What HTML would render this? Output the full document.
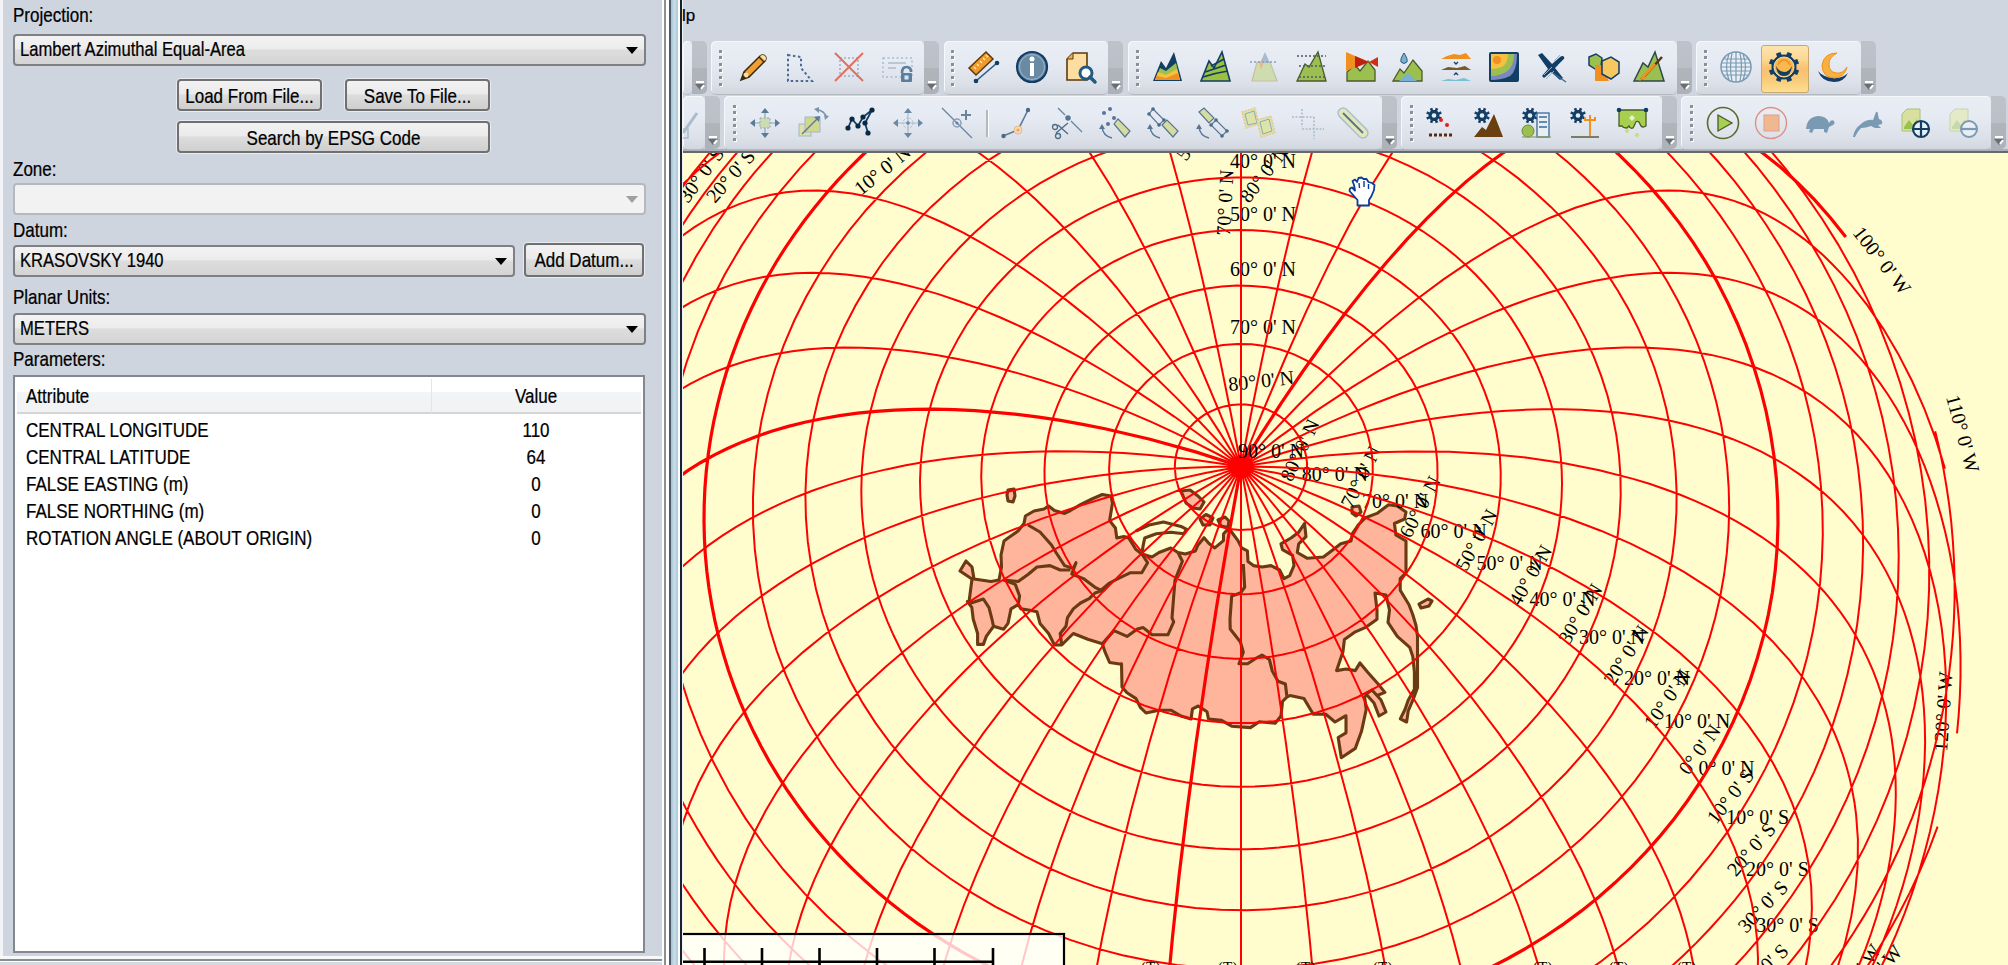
<!DOCTYPE html><html><head><meta charset="utf-8"><style>html,body{-webkit-text-stroke:0.2px #000;margin:0;padding:0;width:2008px;height:965px;overflow:hidden;background:#CFD5DE;font-family:"Liberation Sans",sans-serif;}
#left{position:absolute;left:0;top:0;width:662px;height:965px;background:#CFD5DE;}
#left:before{content:"";position:absolute;left:0;top:0;width:3px;height:956px;background:#F2F4F7}
.lbl{position:absolute;font-size:17px;color:#000;white-space:nowrap;line-height:20px}
.combo{position:absolute;border:2px solid #7E8084;border-radius:4px;background:linear-gradient(#F3F3F3 0%,#ECECEC 45%,#DDDDDD 50%,#D4D4D4 100%);box-sizing:content-box}
.combo.dis{background:#F2F2F2;border-color:#B5B8BD}
.ctext{position:absolute;left:5px;top:5px;font-size:16.6px;line-height:20px;white-space:nowrap;color:#000}
.arr{position:absolute;right:6px;top:11px;width:0;height:0;border-left:6px solid transparent;border-right:6px solid transparent;border-top:7px solid #000}
.dis .arr{border-top-color:#A0A0A0}
.btn{position:absolute;border:2px solid #707070;border-radius:4px;background:linear-gradient(#F2F2F2 0%,#EBEBEB 45%,#DDDDDD 50%,#CFCFCF 100%);font-size:17px;text-align:center;line-height:28px;white-space:nowrap;box-sizing:border-box;box-shadow:0 0 0 1px #E8ECF2}
#list{position:absolute;left:13px;top:375px;width:628px;height:574px;border:2px solid #828790;background:#fff;}
#lhdr{position:absolute;left:2px;top:2px;width:624px;height:33px;background:linear-gradient(#FFFFFF 0%,#FFFFFF 40%,#F3F4F6 41%,#F1F2F4 100%);border-bottom:2px solid #D5D5D5;font-size:17px;}
.row{position:absolute;left:0;width:628px;height:27px;font-size:17px;line-height:27px}
.row .a{position:absolute;left:11px}
.row .v{position:absolute;left:418px;width:206px;text-align:center}
#split{position:absolute;left:662px;top:0;width:21px;height:965px}
#split i{position:absolute;top:0;height:965px}
#topbg{position:absolute;left:683px;top:0;width:1325px;height:149px;background:#D0D6DF}
#tbline{position:absolute;left:683px;top:149px;width:1325px;height:2px;background:#ADB0B5}
#tbline2{position:absolute;left:683px;top:151px;width:1325px;height:2px;background:#66686D;z-index:5}
#top{position:absolute;left:0;top:0}
.menu{position:absolute;font-size:17px;line-height:20px;color:#000}
.tb{position:absolute;border-radius:5px;background:linear-gradient(#E9EDF4 0%,#E6EAF2 40%,#DCE1E9 80%,#D2D7DF 100%);box-shadow:inset 1px 1px 0 #F6F8FB, 0 1px 0 #B4B9C0}
.ov{position:absolute;border-radius:0 5px 5px 0;background:linear-gradient(#BEC3CB 0%,#BAC0C8 50%,#B0B4BB 51%,#ADB1B8 100%);}
.ov .ch1{position:absolute;left:4px;bottom:11px;width:8px;height:2px;background:#fff}
.ov .ch2{position:absolute;left:3px;bottom:4px;width:0;height:0;border-left:5px solid transparent;border-right:5px solid transparent;border-top:6px solid #6A6E74}
.ov .ch2:after{content:'';position:absolute;left:0px;top:-4px;width:5px;height:2px;background:#fff;transform:rotate(-50deg)}
.gd{position:absolute;width:3px;height:3px;background:#8A9098;box-shadow:1px 1px 0 #fff}
.sep{position:absolute;width:2px;height:27px;background:#B0B8C4;box-shadow:1px 0 0 #fff}
.ic{position:absolute;overflow:visible}
.hl{position:absolute;left:1761px;top:45px;width:46px;height:46px;border:1px solid #C8A870;border-radius:3px;background:linear-gradient(#FCE4B0 0%,#FBD890 30%,#F9C070 50%,#F9C878 70%,#FCE090 100%)}
#map{position:absolute;left:683px;top:152px}

.lbl,.ctext{transform:scaleY(1.2);transform-origin:0 16px}
.bt{display:inline-block;position:relative;top:2.5px;line-height:20px;transform:scaleY(1.2);transform-origin:50% 16px}
.hd{line-height:20px;transform:scaleY(1.2);transform-origin:0 16px}
.row .a,.row .v{transform:scaleY(1.2);transform-origin:0 19.5px}
</style></head><body><div id="left">
  <div class="lbl" style="left:13px;top:7px">Projection:</div>
  <div class="combo" style="left:13px;top:34px;width:629px;height:28px"><span class="ctext">Lambert Azimuthal Equal-Area</span><i class="arr"></i></div>
  <div class="btn" style="left:177px;top:79px;width:145px;height:32px"><span class="bt">Load From File...</span></div>
  <div class="btn" style="left:345px;top:79px;width:145px;height:32px"><span class="bt">Save To File...</span></div>
  <div class="btn" style="left:177px;top:121px;width:313px;height:32px"><span class="bt">Search by EPSG Code</span></div>
  <div class="lbl" style="left:13px;top:161px">Zone:</div>
  <div class="combo dis" style="left:13px;top:183px;width:629px;height:28px"><i class="arr"></i></div>
  <div class="lbl" style="left:13px;top:222px">Datum:</div>
  <div class="combo" style="left:13px;top:245px;width:498px;height:28px"><span class="ctext">KRASOVSKY 1940</span><i class="arr"></i></div>
  <div class="btn" style="left:524px;top:243px;width:120px;height:34px"><span class="bt">Add Datum...</span></div>
  <div class="lbl" style="left:13px;top:289px">Planar Units:</div>
  <div class="combo" style="left:13px;top:313px;width:629px;height:28px"><span class="ctext">METERS</span><i class="arr"></i></div>
  <div class="lbl" style="left:13px;top:351px">Parameters:</div>
  <div id="list">
    <div id="lhdr"><span class="hd" style="position:absolute;left:9px;top:9px">Attribute</span><span style="position:absolute;left:414px;top:0;width:1px;height:34px;background:#E3E5E8"></span><span class="hd" style="position:absolute;left:416px;width:206px;text-align:center;top:9px">Value</span></div>
    <div class="row" style="top:41px"><span class="a">CENTRAL LONGITUDE</span><span class="v">110</span></div>
    <div class="row" style="top:68px"><span class="a">CENTRAL LATITUDE</span><span class="v">64</span></div>
    <div class="row" style="top:95px"><span class="a">FALSE EASTING (m)</span><span class="v">0</span></div>
    <div class="row" style="top:122px"><span class="a">FALSE NORTHING (m)</span><span class="v">0</span></div>
    <div class="row" style="top:149px"><span class="a">ROTATION ANGLE (ABOUT ORIGIN)</span><span class="v">0</span></div>
  </div>
  <div style="position:absolute;left:0;top:956px;width:662px;height:3px;background:#F7F8FA"></div>
  <div style="position:absolute;left:0;top:959px;width:662px;height:2px;background:#8A8C90"></div>
  <div style="position:absolute;left:0;top:961px;width:662px;height:1px;background:#FFFFFF"></div>
  <div style="position:absolute;left:0;top:962px;width:662px;height:3px;background:#D5DAE2"></div>
</div>
<div id="split"><i style="left:0;width:2px;background:#FFFFFF"></i><i style="left:2px;width:2px;background:#8C9096"></i><i style="left:4px;width:3px;background:#FFFFFF"></i><i style="left:7px;width:1.5px;background:#4A5A6A"></i><i style="left:8.5px;width:7.5px;background:linear-gradient(90deg,#A8C4D4,#C8DCE8 50%,#A8C8DA)"></i><i style="left:16px;width:2px;background:#FFFFFF"></i><i style="left:18px;width:2px;background:#1A2228"></i><i style="left:20px;width:1px;background:#F0F4F8"></i></div>
<div id="topbg"></div>
<div id="tbline"></div><div id="tbline2"></div>

<div id="top"><div class="menu" style="left:682px;top:6px">lp</div><div class="tb" style="left:683px;top:41px;width:9px;height:53px"></div><div class="ov" style="left:692px;top:41px;width:15px;height:53px"><i class="ch1"></i><i class="ch2"></i></div><div class="tb" style="left:711px;top:41px;width:213px;height:53px"></div><div class="ov" style="left:924px;top:41px;width:15px;height:53px"><i class="ch1"></i><i class="ch2"></i></div><i class="gd" style="left:719px;top:50px"></i><i class="gd" style="left:719px;top:56px"></i><i class="gd" style="left:719px;top:63px"></i><i class="gd" style="left:719px;top:69px"></i><i class="gd" style="left:719px;top:76px"></i><i class="gd" style="left:719px;top:83px"></i><svg class="ic" style="left:737px;top:50px" width="34" height="34" viewBox="-1 -1 34 34"><path d="M3 29 L6 21 L22 5 Q25 3 27 5 Q29 7 27 10 L11 26 Z" fill="#F0A030" stroke="#3A2A10" stroke-width="1.5"/><path d="M6 21 L11 26" stroke="#3A2A10" stroke-width="1.3"/><path d="M21 6 L26 11" stroke="#3A2A10" stroke-width="1.3"/><path d="M22 5 Q25 3 27 5 Q29 7 27 10 Z" fill="#F8E0A0"/><circle cx="8" cy="24" r="2.5" fill="#F8E0A0"/><path d="M3 29 L5 24 L8 27 Z" fill="#3A2A10"/></svg><svg class="ic" style="left:783px;top:50px" width="34" height="34" viewBox="-1 -1 34 34"><path d="M4 4 L17 6 L17 17 L28 30 L4 30 Z" fill="none" stroke="#4A6A96" stroke-width="2" stroke-dasharray="2.5 2.5"/></svg><svg class="ic" style="left:832px;top:50px" width="34" height="34" viewBox="-1 -1 34 34"><rect x="7" y="7" width="18" height="18" fill="none" stroke="#9AB0C6" stroke-width="1.5" stroke-dasharray="2 2"/><path d="M2 2 L30 30 M30 2 L2 30" stroke="#E07060" stroke-width="2"/></svg><svg class="ic" style="left:880px;top:50px" width="34" height="34" viewBox="-1 -1 34 34"><rect x="2" y="7" width="29" height="19" fill="none" stroke="#A8BCD0" stroke-width="1.5" stroke-dasharray="2 2.5"/><path d="M7 12 L25 12 M7 17 L15 17" stroke="#A8BCD0" stroke-width="1.5"/><path d="M21 22 Q21 16 25.5 16 Q30 16 30 21" fill="none" stroke="#5A7EA0" stroke-width="2.6"/><rect x="20" y="22" width="11" height="9" rx="1" fill="#5A7EA0"/><rect x="23.5" y="24.5" width="4" height="4" fill="#DDE6F0"/></svg><div class="tb" style="left:944px;top:41px;width:164px;height:53px"></div><div class="ov" style="left:1108px;top:41px;width:15px;height:53px"><i class="ch1"></i><i class="ch2"></i></div><i class="gd" style="left:951px;top:50px"></i><i class="gd" style="left:951px;top:56px"></i><i class="gd" style="left:951px;top:63px"></i><i class="gd" style="left:951px;top:69px"></i><i class="gd" style="left:951px;top:76px"></i><i class="gd" style="left:951px;top:83px"></i><svg class="ic" style="left:967px;top:50px" width="34" height="34" viewBox="-1 -1 34 34"><path d="M1 17 L18 1 L25 8 L8 24 Z" fill="#F09A28" stroke="#5A3A10" stroke-width="1.5"/><path d="M6 16 l2 2 M9 13 l2 2 M12 10 l2 2 M15 7 l2 2 M18 4 l2 2" stroke="#FFF0C0" stroke-width="1.2"/><path d="M8 30 L29 12" stroke="#2A5A80" stroke-width="1.6"/><circle cx="8" cy="30" r="2.3" fill="#123E66"/><circle cx="29" cy="12" r="2.3" fill="#123E66"/></svg><svg class="ic" style="left:1015px;top:50px" width="34" height="34" viewBox="-1 -1 34 34"><circle cx="16" cy="16" r="15" fill="#6A8AA4" stroke="#123E66" stroke-width="2.2"/><circle cx="16" cy="16" r="12.5" fill="none" stroke="#A8C0D4" stroke-width="0.8"/><circle cx="16" cy="8" r="2.5" fill="#fff"/><rect x="14" y="12" width="4" height="13" fill="#fff"/></svg><svg class="ic" style="left:1063px;top:50px" width="34" height="34" viewBox="-1 -1 34 34"><path d="M3 8 L9 2 L23 2 L23 29 L3 29 Z" fill="#FDDDA0" stroke="#5A3A10" stroke-width="1.6"/><path d="M3 8 L9 8 L9 2" fill="#F0B050" stroke="#5A3A10" stroke-width="1"/><circle cx="22" cy="22" r="6" fill="#fff" stroke="#235A80" stroke-width="3"/><path d="M26 26 L31 31" stroke="#235A80" stroke-width="3.5" stroke-linecap="round"/></svg><div class="tb" style="left:1128px;top:41px;width:549px;height:53px"></div><div class="ov" style="left:1677px;top:41px;width:15px;height:53px"><i class="ch1"></i><i class="ch2"></i></div><i class="gd" style="left:1136px;top:50px"></i><i class="gd" style="left:1136px;top:56px"></i><i class="gd" style="left:1136px;top:63px"></i><i class="gd" style="left:1136px;top:69px"></i><i class="gd" style="left:1136px;top:76px"></i><i class="gd" style="left:1136px;top:83px"></i><svg class="ic" style="left:1151px;top:50px" width="34" height="34" viewBox="-1 -1 34 34"><path d="M1 30 L9 10 L14 17 L22 1 L30 30 Z" fill="#123E66"/><path d="M3 29 L8 17 L14 20 L24 12 L28 29 Z" fill="#9CC050"/><path d="M3 29 L6 21 L14 24 L25 18 L28 29 Z" fill="#F8C040"/><path d="M3 29 L5 25 L14 27 L26 22 L28 29 Z" fill="#F09020"/></svg><svg class="ic" style="left:1199px;top:50px" width="34" height="34" viewBox="-1 -1 34 34"><path d="M1 30 L9 10 L14 17 L22 1 L30 30 Z" fill="#9CC040" stroke="#123E66" stroke-width="1.6"/><path d="M5 21 Q14 18 26 14 M3 26 Q15 22 28 20 M11 15 Q17 12 24 8" stroke="#123E66" stroke-width="1.6" fill="none"/></svg><svg class="ic" style="left:1247px;top:50px" width="34" height="34" viewBox="-1 -1 34 34"><path d="M4 30 L9 11 L22 11 L29 30 Z" fill="#CFDCAF" stroke="#C8C0A0" stroke-width="1.2"/><path d="M17 1 L12 12 L22 12 Z" fill="#A8BCCC"/><path d="M11 11 L16 11 L13 19 Z" fill="#E8B890"/><path d="M2 11 L30 11" stroke="#8AA0B8" stroke-width="1.5" stroke-dasharray="2 2"/></svg><svg class="ic" style="left:1295px;top:50px" width="34" height="34" viewBox="-1 -1 34 34"><path d="M1 30 L9 13 L13 16 L22 1 L30 30 Z" fill="#9CC050" stroke="#4A5A2A" stroke-width="1.3"/><path d="M1 5 L30 5 M3 15 L30 15 M3 26 L30 26" stroke="#4A5A6A" stroke-width="1.3" stroke-dasharray="2 2"/></svg><svg class="ic" style="left:1344px;top:50px" width="34" height="34" viewBox="-1 -1 34 34"><path d="M2 30 L2 21 L10 14 L15 20 L23 10 L30 19 L30 30 Z" fill="#9CC050" stroke="#4A5A2A" stroke-width="1.3"/><path d="M1 1 L24 11 L1 20 Z" fill="#F09020"/><path d="M10 5 L24 11 L10 17 Z" fill="#C02010"/><path d="M24 11 L33 6 L33 16 Z" fill="#D03010"/></svg><svg class="ic" style="left:1391px;top:50px" width="34" height="34" viewBox="-1 -1 34 34"><path d="M1 30 L8 18 L12 22 L21 9 L30 20 L30 30 Z" fill="#9CC050" stroke="#4A5A2A" stroke-width="1.3"/><path d="M7 30 L16 22 L25 30 Z" fill="#7AB0D0"/><path d="M12 2 Q8 8 9 11 Q12 14 15 11 Q16 8 12 2 Z" fill="#7AB0D0" stroke="#2A5A80" stroke-width="1"/></svg><svg class="ic" style="left:1439px;top:50px" width="34" height="34" viewBox="-1 -1 34 34"><path d="M1 8 L7 5 L14 3 L20 4 L26 2 L31 8 Z" fill="#F09020"/><path d="M1 19 L8 16 L17 17 L25 15 L31 19 Z" fill="#7A5A2A"/><path d="M1 30 L8 28 L16 29 L24 27 L31 30 Z" fill="#7AC0D0"/><path d="M14 11 l2 2 l2 -2 M14 24 l2 -2 l2 2" stroke="#123E66" stroke-width="1.3" fill="none"/></svg><svg class="ic" style="left:1487px;top:50px" width="34" height="34" viewBox="-1 -1 34 34"><rect x="1" y="1" width="30" height="30" rx="2" fill="#123E66"/><path d="M3 3 L29 3 Q29 20 22 25 Q14 29 3 29 Z" fill="#7A88C0"/><path d="M3 3 L26 3 Q26 16 18 21 Q11 25 3 25 Z" fill="#9CC050"/><path d="M3 3 L20 3 Q20 12 14 16 Q9 18 3 18 Z" fill="#F8C040"/><circle cx="9" cy="9" r="4" fill="#F09020"/></svg><svg class="ic" style="left:1535px;top:50px" width="34" height="34" viewBox="-1 -1 34 34"><path d="M2 4 L6 2 L16 13 L24 6 Q27 4 28 6 Q29 8 26 10 L19 17 L27 27 L24 29 L15 21 L8 27 L6 25 L12 18 Z" fill="#123E66"/><path d="M17 22 L30 31" stroke="#3A6A90" stroke-width="1.3"/><path d="M8 24 L16 16 M10 28 L18 20 M18 10 L24 4 M22 14 L28 8" stroke="#9AB4C8" stroke-width="1"/></svg><svg class="ic" style="left:1584px;top:50px" width="34" height="34" viewBox="-1 -1 34 34"><path d="M4 6 L11 3 L17 7 L16 15 L10 18 L4 14 Z" fill="#9CC050" stroke="#123E66" stroke-width="1.5"/><path d="M10 14 L16 14 L24 30 L10 30 Z" fill="#F09020"/><path d="M17 10 L26 6 L34 11 L34 22 L26 28 L17 23 Z" fill="#F8C860" stroke="#123E66" stroke-width="1.5"/></svg><svg class="ic" style="left:1632px;top:50px" width="34" height="34" viewBox="-1 -1 34 34"><path d="M1 30 L10 12 L15 16 L22 1 L31 30 Z" fill="#9CC050" stroke="#2A4A4A" stroke-width="1.5"/><path d="M8 29 L29 6" stroke="#5A3010" stroke-width="2.5"/><path d="M6 30 L10 24 L14 27 Z" fill="#F09020"/><path d="M10 26 L22 13" stroke="#F09020" stroke-width="3"/></svg><div class="tb" style="left:1696px;top:41px;width:165px;height:53px"></div><div class="hl"></div><div class="ov" style="left:1861px;top:41px;width:15px;height:53px"><i class="ch1"></i><i class="ch2"></i></div><i class="gd" style="left:1704px;top:50px"></i><i class="gd" style="left:1704px;top:56px"></i><i class="gd" style="left:1704px;top:63px"></i><i class="gd" style="left:1704px;top:69px"></i><i class="gd" style="left:1704px;top:76px"></i><i class="gd" style="left:1704px;top:83px"></i><svg class="ic" style="left:1719px;top:50px" width="34" height="34" viewBox="-1 -1 34 34"><circle cx="16" cy="16" r="15" fill="#E8EEF4" stroke="#7A9AB4" stroke-width="1.5"/><path d="M16 1 L16 31 M1 16 L31 16 M4 8 L28 8 M4 24 L28 24 M9 3 Q4 16 9 29 M23 3 Q28 16 23 29 M12 2 Q9 16 12 30 M20 2 Q23 16 20 30 M2 12 L30 12 M2 20 L30 20" stroke="#7A9AB4" stroke-width="1.2" fill="none"/></svg><svg class="ic" style="left:1767px;top:50px" width="34" height="34" viewBox="-1 -1 34 34"><path d="M28.5 16.0 L28.3 18.4 L31.1 19.6 L29.2 24.1 L26.4 22.9 L24.8 24.8 L22.9 26.4 L24.1 29.2 L19.6 31.1 L18.4 28.3 L16.0 28.5 L13.6 28.3 L12.4 31.1 L7.9 29.2 L9.1 26.4 L7.2 24.8 L5.6 22.9 L2.8 24.1 L0.9 19.6 L3.7 18.4 L3.5 16.0 L3.7 13.6 L0.9 12.4 L2.8 7.9 L5.6 9.1 L7.2 7.2 L9.1 5.6 L7.9 2.8 L12.4 0.9 L13.6 3.7 L16.0 3.5 L18.4 3.7 L19.6 0.9 L24.1 2.8 L22.9 5.6 L24.8 7.2 L26.4 9.1 L29.2 7.9 L31.1 12.4 L28.3 13.6Z" fill="#123E66"/><circle cx="16" cy="16" r="10" fill="#F8B850" stroke="#FCE0A0" stroke-width="1"/><path d="M8 15 Q9 25 16 25 Q23 25 24 15 Q21 21 16 21 Q11 21 8 15 Z" fill="#123E66"/><path d="M10 14 Q12 9 16 9 Q20 9 22 14" stroke="#F09020" stroke-width="1.6" fill="none"/></svg><svg class="ic" style="left:1815px;top:50px" width="34" height="34" viewBox="-1 -1 34 34"><path d="M2 20 Q6 31 18 31 Q28 31 32 22 Q26 28 17 27 Q7 26 2 20 Z" fill="#123E66"/><path d="M21 2 Q8 2 6 14 Q6 26 18 27 Q29 26 31 16 Q27 23 20 22 Q13 21 13 13 Q13 6 21 2 Z" fill="#F8B040" stroke="#F09020" stroke-width="1"/></svg><div class="tb" style="left:683px;top:96px;width:22px;height:53px"></div><svg style="position:absolute;left:683px;top:103px" width="22" height="40"><path d="M0 30 L14 10" stroke="#A8BCCC" stroke-width="3"/><rect x="-6" y="26" width="11" height="9" fill="none" stroke="#A8BCCC" stroke-width="1.5"/></svg><div class="ov" style="left:705px;top:96px;width:15px;height:53px"><i class="ch1"></i><i class="ch2"></i></div><div class="tb" style="left:724px;top:96px;width:658px;height:53px"></div><div class="ov" style="left:1382px;top:96px;width:15px;height:53px"><i class="ch1"></i><i class="ch2"></i></div><i class="gd" style="left:733px;top:105px"></i><i class="gd" style="left:733px;top:111px"></i><i class="gd" style="left:733px;top:118px"></i><i class="gd" style="left:733px;top:124px"></i><i class="gd" style="left:733px;top:131px"></i><i class="gd" style="left:733px;top:138px"></i><svg class="ic" style="left:748px;top:106px" width="34" height="34" viewBox="-1 -1 34 34"><path d="M16 1 L20 6 L12 6 Z M16 31 L20 26 L12 26 Z M1 16 L6 12 L6 20 Z M31 16 L26 12 L26 20 Z" fill="#5A7A96"/><path d="M16 6 L16 26 M6 16 L26 16" stroke="#8AA4BC" stroke-width="1.2"/><rect x="11" y="11" width="10" height="10" fill="#CDDCB0" stroke="#8AA4BC" stroke-width="1" stroke-dasharray="2 1.5"/></svg><svg class="ic" style="left:796px;top:106px" width="34" height="34" viewBox="-1 -1 34 34"><rect x="2" y="17" width="12" height="12" fill="#DDE0A8" stroke="#A0B8C8" stroke-width="1"/><rect x="8" y="10" width="15" height="15" fill="#D0D890" stroke="#A0B8C8" stroke-width="1"/><path d="M5 27 L21 11" stroke="#5A7A96" stroke-width="1.5"/><path d="M23 9 L17 10 L22 15 Z" fill="#5A7A96"/><path d="M20 3 Q27 3 30 11" stroke="#7A94AC" stroke-width="1.5" fill="none"/><path d="M17 2 L22 0 L22 6 Z M28 13 L32 9 L27 8 Z" fill="#7A94AC"/></svg><svg class="ic" style="left:843px;top:106px" width="34" height="34" viewBox="-1 -1 34 34"><path d="M4 21 L8 12 L14 19 L19 10 L28 3 L21 16 L24 26" stroke="#123E66" stroke-width="1.8" fill="none"/><circle cx="4" cy="21" r="2.6" fill="#0A2A44"/><circle cx="8" cy="12" r="2.6" fill="#0A2A44"/><circle cx="14" cy="19" r="2.6" fill="#0A2A44"/><circle cx="19" cy="10" r="2.6" fill="#0A2A44"/><circle cx="28" cy="3" r="2.6" fill="#0A2A44"/><circle cx="21" cy="16" r="2.6" fill="#0A2A44"/><circle cx="24" cy="26" r="2.6" fill="#0A2A44"/></svg><svg class="ic" style="left:891px;top:106px" width="34" height="34" viewBox="-1 -1 34 34"><path d="M16 1 L20 6 L12 6 Z M16 31 L20 26 L12 26 Z M1 16 L6 12 L6 20 Z M31 16 L26 12 L26 20 Z" fill="#6A88A4"/><path d="M16 6 L16 26 M6 16 L26 16" stroke="#A8BCCC" stroke-width="1.2"/><circle cx="16" cy="16" r="5" fill="none" stroke="#A8BCCC" stroke-width="1" stroke-dasharray="2 1.5"/><circle cx="16" cy="16" r="1.8" fill="#6A88A4"/></svg><svg class="ic" style="left:940px;top:106px" width="34" height="34" viewBox="-1 -1 34 34"><path d="M1 1 L31 31" stroke="#6A84A0" stroke-width="1.3"/><circle cx="16" cy="16" r="4" fill="none" stroke="#8AA0B8" stroke-width="1.5"/><circle cx="16" cy="16" r="1.6" fill="#6A84A0"/><path d="M25 3 L25 13 M20 8 L30 8" stroke="#6A84A0" stroke-width="2"/></svg><svg class="ic" style="left:1000px;top:106px" width="34" height="34" viewBox="-1 -1 34 34"><path d="M2 29 L17 23 L27 3" stroke="#5A7A96" stroke-width="1.6" fill="none"/><circle cx="2.5" cy="29" r="2.2" fill="#4A6A86"/><circle cx="27" cy="3" r="2.2" fill="#4A6A86"/><circle cx="17" cy="23" r="4" fill="#F8D8B0" stroke="#E8B890" stroke-width="1"/><circle cx="17" cy="23" r="1.5" fill="#F0A060"/></svg><svg class="ic" style="left:1049px;top:106px" width="34" height="34" viewBox="-1 -1 34 34"><path d="M8 1 L32 25" stroke="#6A84A0" stroke-width="1.3"/><circle cx="18" cy="11" r="3.5" fill="#5A7496" stroke="#E8EEF4" stroke-width="1.5"/><path d="M6 26 L18 16 M8 18 L18 27" stroke="#4A6A86" stroke-width="1.3"/><circle cx="5" cy="20" r="2.5" fill="none" stroke="#4A6A86" stroke-width="1.3"/><circle cx="8" cy="29" r="2.5" fill="none" stroke="#4A6A86" stroke-width="1.3"/></svg><svg class="ic" style="left:1095px;top:106px" width="34" height="34" viewBox="-1 -1 34 34"><circle cx="8" cy="6" r="2" fill="#5A7496"/><circle cx="14" cy="2" r="2" fill="#5A7496"/><circle cx="18" cy="11" r="2" fill="#5A7496"/><circle cx="12" cy="17" r="2" fill="#5A7496"/><path d="M18 17 L22 12 L34 24 L29 30 Z" fill="#D4DCA0" stroke="#5A7496" stroke-width="1.2"/><path d="M6 20 Q7 29 16 31" stroke="#5A7496" stroke-width="1.5" fill="none"/><path d="M3 22 L6 17 L9 22 Z" fill="#5A7496"/></svg><svg class="ic" style="left:1143px;top:106px" width="34" height="34" viewBox="-1 -1 34 34"><path d="M5 7 L9 2 L20 13 L15 18 Z" fill="none" stroke="#5A7496" stroke-width="1.2"/><circle cx="5" cy="7" r="1.8" fill="#4A6A86"/><circle cx="9" cy="2" r="1.8" fill="#4A6A86"/><circle cx="20" cy="13" r="1.8" fill="#4A6A86"/><circle cx="15" cy="18" r="1.8" fill="#4A6A86"/><path d="M18 18 L23 13 L34 24 L29 30 Z" fill="#D4DCA0" stroke="#5A7496" stroke-width="1.2"/><path d="M6 20 Q7 29 16 31" stroke="#5A7496" stroke-width="1.5" fill="none"/><path d="M3 22 L6 17 L9 22 Z" fill="#5A7496"/></svg><svg class="ic" style="left:1194px;top:106px" width="34" height="34" viewBox="-1 -1 34 34"><path d="M4 5 L9 1 L19 11 L14 16 Z" fill="#D4DCA0" stroke="#5A7496" stroke-width="1.2"/><path d="M16 18 L21 13 L32 24 L27 29 Z" fill="none" stroke="#5A7496" stroke-width="1.2"/><circle cx="16" cy="18" r="1.8" fill="#4A6A86"/><circle cx="21" cy="13" r="1.8" fill="#4A6A86"/><circle cx="32" cy="24" r="1.8" fill="#4A6A86"/><circle cx="27" cy="29" r="1.8" fill="#4A6A86"/><path d="M4 20 Q5 29 14 31" stroke="#5A7496" stroke-width="1.5" fill="none"/><path d="M1 22 L4 17 L7 22 Z" fill="#5A7496"/></svg><svg class="ic" style="left:1240px;top:106px" width="34" height="34" viewBox="-1 -1 34 34"><path d="M1 5 L14 1 L18 17 L5 21 Z" fill="#DDE4A8" stroke="#E8C898" stroke-width="1.5" stroke-dasharray="2 1"/><path d="M4 7 L13 4 L16 16 L7 18 Z" fill="none" stroke="#8AA8C0" stroke-width="1"/><path d="M16 13 L30 9 L34 26 L20 30 Z" fill="#DDE4A8" stroke="#E8C898" stroke-width="1.5" stroke-dasharray="2 1"/><path d="M19 15 L28 12 L31 24 L22 27 Z" fill="none" stroke="#8AA8C0" stroke-width="1"/></svg><svg class="ic" style="left:1289px;top:106px" width="34" height="34" viewBox="-1 -1 34 34"><path d="M12 2 L12 20 M2 10 L24 10 M24 10 L24 32 M12 22 L34 22" stroke="#A8BCCC" stroke-width="1.5" stroke-dasharray="2 1.5"/></svg><svg class="ic" style="left:1336px;top:106px" width="34" height="34" viewBox="-1 -1 34 34"><rect x="-3" y="11" width="38" height="10" rx="5" transform="rotate(45 16 16)" fill="#E4E8B8" stroke="#A8C0D0" stroke-width="1.5"/><path d="M6 6 L26 26" stroke="#5A7496" stroke-width="2"/></svg><i class="sep" style="left:986px;top:110px"></i><div class="tb" style="left:1401px;top:96px;width:261px;height:53px"></div><div class="ov" style="left:1662px;top:96px;width:15px;height:53px"><i class="ch1"></i><i class="ch2"></i></div><i class="gd" style="left:1410px;top:105px"></i><i class="gd" style="left:1410px;top:111px"></i><i class="gd" style="left:1410px;top:118px"></i><i class="gd" style="left:1410px;top:124px"></i><i class="gd" style="left:1410px;top:131px"></i><i class="gd" style="left:1410px;top:138px"></i><svg class="ic" style="left:1424px;top:106px" width="34" height="34" viewBox="-1 -1 34 34"><path d="M14.5 8.5 L14.4 9.5 L16.8 10.2 L15.7 12.8 L13.5 11.6 L12.9 12.4 L12.1 13.0 L13.3 15.2 L10.7 16.3 L10.0 13.9 L9.0 14.0 L8.0 13.9 L7.3 16.3 L4.7 15.2 L5.9 13.0 L5.1 12.4 L4.5 11.6 L2.3 12.8 L1.2 10.2 L3.6 9.5 L3.5 8.5 L3.6 7.5 L1.2 6.8 L2.3 4.2 L4.5 5.4 L5.1 4.6 L5.9 4.0 L4.7 1.8 L7.3 0.7 L8.0 3.1 L9.0 3.0 L10.0 3.1 L10.7 0.7 L13.3 1.8 L12.1 4.0 L12.9 4.6 L13.5 5.4 L15.7 4.2 L16.8 6.8 L14.4 7.5Z" fill="#123E66"/><circle cx="9" cy="8.5" r="2.3" fill="#E8EEF4"/><circle cx="16" cy="13" r="2" fill="#E02020"/><circle cx="22" cy="18" r="2" fill="#E02020"/><path d="M4 28 L28 28" stroke="#5A2A10" stroke-width="3" stroke-dasharray="3 2"/></svg><svg class="ic" style="left:1472px;top:106px" width="34" height="34" viewBox="-1 -1 34 34"><path d="M14.5 8.5 L14.4 9.5 L16.8 10.2 L15.7 12.8 L13.5 11.6 L12.9 12.4 L12.1 13.0 L13.3 15.2 L10.7 16.3 L10.0 13.9 L9.0 14.0 L8.0 13.9 L7.3 16.3 L4.7 15.2 L5.9 13.0 L5.1 12.4 L4.5 11.6 L2.3 12.8 L1.2 10.2 L3.6 9.5 L3.5 8.5 L3.6 7.5 L1.2 6.8 L2.3 4.2 L4.5 5.4 L5.1 4.6 L5.9 4.0 L4.7 1.8 L7.3 0.7 L8.0 3.1 L9.0 3.0 L10.0 3.1 L10.7 0.7 L13.3 1.8 L12.1 4.0 L12.9 4.6 L13.5 5.4 L15.7 4.2 L16.8 6.8 L14.4 7.5Z" fill="#123E66"/><circle cx="9" cy="8.5" r="2.3" fill="#E8EEF4"/><path d="M1 30 L9 20 L13 23 L21 7 L30 30 Z" fill="#6A4010"/></svg><svg class="ic" style="left:1520px;top:106px" width="34" height="34" viewBox="-1 -1 34 34"><path d="M14.5 8.5 L14.4 9.5 L16.8 10.2 L15.7 12.8 L13.5 11.6 L12.9 12.4 L12.1 13.0 L13.3 15.2 L10.7 16.3 L10.0 13.9 L9.0 14.0 L8.0 13.9 L7.3 16.3 L4.7 15.2 L5.9 13.0 L5.1 12.4 L4.5 11.6 L2.3 12.8 L1.2 10.2 L3.6 9.5 L3.5 8.5 L3.6 7.5 L1.2 6.8 L2.3 4.2 L4.5 5.4 L5.1 4.6 L5.9 4.0 L4.7 1.8 L7.3 0.7 L8.0 3.1 L9.0 3.0 L10.0 3.1 L10.7 0.7 L13.3 1.8 L12.1 4.0 L12.9 4.6 L13.5 5.4 L15.7 4.2 L16.8 6.8 L14.4 7.5Z" fill="#123E66"/><circle cx="9" cy="8.5" r="2.3" fill="#E8EEF4"/><rect x="16" y="6" width="12" height="24" fill="#E8EEF4" stroke="#3A6A96" stroke-width="1.3"/><path d="M18 10 h8 M18 15 h8 M18 20 h8" stroke="#3A6A96" stroke-width="1.5"/><circle cx="7" cy="24" r="6" fill="#9CC050" stroke="#6A8A40" stroke-width="1"/><path d="M1 30 L30 30" stroke="#8AA060" stroke-width="1.2"/></svg><svg class="ic" style="left:1568px;top:106px" width="34" height="34" viewBox="-1 -1 34 34"><path d="M14.5 8.5 L14.4 9.5 L16.8 10.2 L15.7 12.8 L13.5 11.6 L12.9 12.4 L12.1 13.0 L13.3 15.2 L10.7 16.3 L10.0 13.9 L9.0 14.0 L8.0 13.9 L7.3 16.3 L4.7 15.2 L5.9 13.0 L5.1 12.4 L4.5 11.6 L2.3 12.8 L1.2 10.2 L3.6 9.5 L3.5 8.5 L3.6 7.5 L1.2 6.8 L2.3 4.2 L4.5 5.4 L5.1 4.6 L5.9 4.0 L4.7 1.8 L7.3 0.7 L8.0 3.1 L9.0 3.0 L10.0 3.1 L10.7 0.7 L13.3 1.8 L12.1 4.0 L12.9 4.6 L13.5 5.4 L15.7 4.2 L16.8 6.8 L14.4 7.5Z" fill="#123E66"/><circle cx="9" cy="8.5" r="2.3" fill="#E8EEF4"/><path d="M21 8 L21 29 M16 13 L26 13 M16 10 L16 14 M26 10 L26 14" stroke="#F09020" stroke-width="2"/><path d="M2 30 L30 30" stroke="#5A5A3A" stroke-width="1.5"/></svg><svg class="ic" style="left:1616px;top:106px" width="34" height="34" viewBox="-1 -1 34 34"><path d="M2 3 L29 3 L29 19 Q26 21 24 19 L22 15 Q19 13 18 17 L16 21 Q13 22 12 19 L10 21 Q6 21 5 19 L2 19 Z" fill="#A8D050" stroke="#4A5A2A" stroke-width="1.3"/><circle cx="2" cy="3" r="2.3" fill="#123E66"/><circle cx="29" cy="3" r="2.3" fill="#123E66"/><circle cx="10" cy="24" r="2" fill="#C8E070"/><circle cx="20" cy="28" r="2" fill="#C8E070"/><path d="M15 8 l3 3 l-3 3 l-3 -3 Z" fill="#E8F0D0"/></svg><div class="tb" style="left:1681px;top:96px;width:310px;height:53px"></div><div class="ov" style="left:1991px;top:96px;width:15px;height:53px"><i class="ch1"></i><i class="ch2"></i></div><i class="gd" style="left:1690px;top:105px"></i><i class="gd" style="left:1690px;top:111px"></i><i class="gd" style="left:1690px;top:118px"></i><i class="gd" style="left:1690px;top:124px"></i><i class="gd" style="left:1690px;top:131px"></i><i class="gd" style="left:1690px;top:138px"></i><svg class="ic" style="left:1706px;top:106px" width="34" height="34" viewBox="-1 -1 34 34"><circle cx="16" cy="16" r="15.5" fill="none" stroke="#5A6A30" stroke-width="1.6"/><path d="M11 8 L25 16 L11 24 Z" fill="#A8D050" stroke="#4A5A2A" stroke-width="1.3"/></svg><svg class="ic" style="left:1754px;top:106px" width="34" height="34" viewBox="-1 -1 34 34"><circle cx="16" cy="16" r="15.5" fill="none" stroke="#E09080" stroke-width="1.4"/><rect x="9" y="8" width="15" height="16" fill="#F0B890" stroke="#E0A088" stroke-width="1"/></svg><svg class="ic" style="left:1802px;top:106px" width="34" height="34" viewBox="-1 -1 34 34"><path d="M3 22 Q4 10 15 9 Q24 9 26 16 Q28 12 31 14 Q33 17 28 19 L26 20 L24 26 L21 25 L21 22 L11 22 L9 26 L6 25 L7 22 Z" fill="#7A9AB4"/></svg><svg class="ic" style="left:1850px;top:106px" width="34" height="34" viewBox="-1 -1 34 34"><path d="M2 30 Q3 22 10 17 Q16 12 22 13 L25 5 Q27 4 27 8 L28 12 Q32 13 31 17 L27 18 L30 21 L24 21 L20 19 Q15 21 10 21 Q6 25 4 30 Z" fill="#7A9AB4"/></svg><svg class="ic" style="left:1898px;top:106px" width="34" height="34" viewBox="-1 -1 34 34"><path d="M3 7 L8 2 L21 2 L21 24 L3 24 Z" fill="#D8E0A0" stroke="#A8C080" stroke-width="1"/><path d="M5 20 L10 13 L14 18 L18 12 L19 22 L5 22 Z" fill="#9CC050"/><circle cx="22" cy="22" r="8" fill="#E8EEF4" stroke="#123E66" stroke-width="2.2"/><path d="M22 15 L22 29 M15 22 L29 22" stroke="#123E66" stroke-width="2.2"/></svg><svg class="ic" style="left:1946px;top:106px" width="34" height="34" viewBox="-1 -1 34 34"><path d="M3 7 L8 2 L21 2 L21 24 L3 24 Z" fill="#E4EAC8" stroke="#C8D4B0" stroke-width="1"/><path d="M5 20 L10 13 L14 18 L18 12 L19 22 L5 22 Z" fill="#C8D8A8"/><circle cx="22" cy="22" r="8" fill="#E8EEF4" stroke="#7A9AB4" stroke-width="2"/><path d="M15 22 L29 22" stroke="#7A9AB4" stroke-width="2.2"/></svg></div><svg id="map" width="1325" height="813" viewBox="683 152 1325 813"><rect x="683" y="152" width="1325" height="813" fill="#FFFCCD"/><g stroke="#6B3A12" stroke-width="3.1" stroke-linejoin="round" fill="#FFB49C"><path d="M969,602 L972,579 L960,571 L966,561 L972,567 L974,579 L991,581.5 L999,580 L1001.5,567 L1001,555 L1004,541 L1008,538 L1018,531 L1024,523.5 L1025.4,516 L1034,511 L1044,509 L1048.6,506 L1054.4,510.5 L1064.6,513.4 L1070.4,510.5 L1080.5,504.7 L1092,499 L1102.3,494.5 L1111,496 L1112.5,503 L1109.6,520.6 L1115.4,528 L1116.8,538 L1124,536.6 L1128.7,538 L1136,549.6 L1141.8,554 L1152,557 L1159,552.5 L1170.8,548 L1178,552.5 L1185.3,554 L1195.4,551 L1198,545 L1204,537.7 L1209,543.5 L1214.8,547.9 L1223.5,540.6 L1223.5,534 L1227,530 L1231,531.2 L1238,540.6 L1241.6,547.9 L1247.4,550.8 L1248,561.6 L1253.4,565.6 L1262.2,567 L1271,565.6 L1279.6,570 L1284,578.6 L1289.7,575.7 L1294,565.6 L1292.6,555.4 L1282.5,549.6 L1281,543.8 L1291,538 L1298.7,532.2 L1304.5,523.5 L1306,536.6 L1298.7,543.8 L1297.3,552.5 L1307.4,558.3 L1323.4,557 L1335,548.2 L1340.8,543.8 L1351,541 L1352.4,533.7 L1358.2,525 L1365.4,517.7 L1377,513.4 L1388.6,504.7 L1397.3,506 L1406,512 L1404.6,519 L1394.4,523.5 L1395.9,535 L1406,541 L1406,552.5 L1406,572.8 L1400.2,578.6 L1400.2,590.2 L1409,604.7 L1412.8,614.7 L1416,625.5 L1417.5,636.4 L1417.5,687.7 L1412.8,700.2 L1408.2,711 L1406.6,722 L1400.4,718.8 L1405,709.5 L1408.2,700.2 L1414.4,689.3 L1414.4,672.2 L1412.8,656.6 L1409.7,647.3 L1397.3,636.4 L1388,622.4 L1389.5,610 L1386,595 L1375,593 L1377,610 L1377,619.3 L1366.2,627.1 L1355.3,631.8 L1344.4,639.5 L1342.9,652 L1336.6,670.6 L1346,669 L1355.3,670.6 L1360,662.9 L1367.7,672.2 L1378.6,684.6 L1384.9,692.4 L1377,695.5 L1367.7,694 L1364.6,697 L1366.2,709.5 L1361.5,731.3 L1355.3,748.4 L1341.3,757.7 L1338.2,737.5 L1346,732.8 L1346,715.7 L1335,722 L1325.8,714.2 L1313.3,714.2 L1304,698.6 L1290,695.5 L1286.8,697.2 L1282.5,701.5 L1281,716 L1275.2,723.3 L1259.3,721.8 L1250.5,727.6 L1231.7,726.2 L1221.5,720.4 L1208.5,719 L1207,711.7 L1198.3,706 L1192.5,708.8 L1191,719 L1181,716 L1170.8,710.2 L1159,710.2 L1146,713 L1140.3,707.3 L1136,698.6 L1127,692.8 L1122,687 L1121.5,663.8 L1119.7,664 L1109.6,662.5 L1105.2,652.4 L1102.3,643.7 L1087.8,639.3 L1073.3,633.5 L1061.7,645 L1054.4,645 L1048.6,633.5 L1040,623.4 L1037,611.8 L1029.8,610.3 L1021,608.9 L1018.2,604.5 L1011,608.9 L1008,623.4 L1003.7,629.2 L993.5,626.3 L986.3,636.4 L983.4,644.4 L977.6,644.4 L977.6,633.5 L973.2,619 L971.8,607.4 L967.4,601.6Z"/><path d="M1008,490 L1014,489 L1015,496 L1013,502 L1008,501 L1007,495Z"/><path d="M1181,491 L1190,490 L1198,496 L1204,502 L1200,509 L1193,508 L1186,503Z"/><path d="M1200,519 L1206,514.5 L1213,518 L1210,525 L1203,525Z"/><path d="M1218,520 L1225,517 L1229,521 L1228,527.5 L1221,526Z"/><path d="M1352,507 L1359,506 L1361,512 L1356,516 L1352,513Z"/><path d="M1419,604 L1428,599 L1432,601 L1429,606 L1421,608Z"/><path d="M1366,694 L1372,690 L1381,700 L1386,712 L1379,716 L1374,703Z"/></g><g stroke="#6B3A12" stroke-width="3.1" stroke-linejoin="round" fill="none"><polyline points="1028,525 1040,532 1051.5,545 1056,552.5 1064.6,565.6 1073.3,568.5 1076,562.7 1071.8,574 1083.4,578.6 1095,587.3 1100.9,590.2 1109.6,583 1118,578.6 1130,572.8 1141.8,572.8 1147.6,562.7 1141.8,554"/><polyline points="1003.7,580 1018.2,581.5 1028.3,574.3 1037,567 1050,565.6 1060.2,570 1070.4,570"/><polyline points="1003.7,580 1015.3,584.4 1019.6,596 1018.2,604.5"/><polyline points="970.3,603.3 983.4,599 989,607.6 992,619.3 993.5,626.3"/><polyline points="1109.6,583 1103.8,590 1095,593 1089.2,598.7 1080.5,603 1073.3,608.9 1067.5,617.6 1066,626.3 1060.2,633.5 1061.7,645"/><polyline points="1102.3,643.7 1114,630.6 1127,636.4 1137.4,629 1143.2,627.6 1152,634.8 1167.9,634.8 1173.7,621.8 1172,617.8 1175,580 1182.4,561.2 1178,552.5"/><polyline points="1243.3,564 1244.7,587.3 1240.4,593 1231.7,596 1230,619 1230.2,629 1240.4,642 1243.3,652.2 1239,663.8 1247.6,663.8 1256.4,658 1262,655 1269.4,659.5 1272.3,671 1278,681.2 1285.4,684 1286.8,695.7"/><polyline points="1136,531 1149,525 1163.5,522 1181,526.4 1186.7,529.3 1183.8,533.7 1170.8,532.2 1156.3,533.7 1144.7,538 1143.2,545.3 1141.8,554"/></g><g font-family="Liberation Serif" font-size="20" fill="#000"><text x="1301.8" y="481.3">80° 0' N</text><text transform="translate(1291.8 482.8) rotate(-64.7)">80° 0' N</text><text x="1362.1" y="507.9">70° 0' N</text><text transform="translate(1352.1 509.4) rotate(-63.5)">70° 0' N</text><text x="1420.6" y="537.7">60° 0' N</text><text transform="translate(1410.6 539.2) rotate(-62.4)">60° 0' N</text><text x="1476.6" y="570.4">50° 0' N</text><text transform="translate(1466.6 571.9) rotate(-61.2)">50° 0' N</text><text x="1529.5" y="605.9">40° 0' N</text><text transform="translate(1519.5 607.4) rotate(-59.9)">40° 0' N</text><text x="1578.9" y="644.1">30° 0' N</text><text transform="translate(1568.9 645.6) rotate(-58.6)">30° 0' N</text><text x="1623.9" y="684.9">20° 0' N</text><text transform="translate(1613.9 686.4) rotate(-57.2)">20° 0' N</text><text x="1664.1" y="728.4">10° 0' N</text><text transform="translate(1654.1 729.9) rotate(-55.6)">10° 0' N</text><text x="1698.5" y="774.5">0° 0' N</text><text transform="translate(1688.5 776.0) rotate(-53.9)">0° 0' N</text><text x="1726.3" y="823.6">10° 0' S</text><text transform="translate(1716.3 825.1) rotate(-51.8)">10° 0' S</text><text x="1746.1" y="876.0">20° 0' S</text><text transform="translate(1736.1 877.5) rotate(-49.4)">20° 0' S</text><text x="1756.2" y="932.4">30° 0' S</text><text transform="translate(1746.2 933.9) rotate(-46.6)">30° 0' S</text><text x="1753.9" y="993.8">40° 0' S</text><text transform="translate(1743.9 995.3) rotate(-43.0)">40° 0' S</text><text x="1230" y="167.5">40° 0' N</text><text x="1230" y="220.5">50° 0' N</text><text x="1230" y="276.3">60° 0' N</text><text x="1230" y="334.3">70° 0' N</text><text transform="translate(1229 391) rotate(-6)">80° 0' N</text><text transform="translate(1230 236) rotate(-87)">70° 0' N</text><text transform="translate(1249 204) rotate(-52)">80° 0' N</text><text transform="translate(1186 162) rotate(-54)">50° 0' N</text><text transform="translate(688 204) rotate(-53.6)">30° 0' S</text><text transform="translate(715 204) rotate(-48.7)">20° 0' S</text><text transform="translate(861 196) rotate(-39)">10° 0' N</text><text transform="translate(1852 233) rotate(52)">100° 0' W</text><text transform="translate(1946 397) rotate(75)">110° 0' W</text><text transform="translate(1947 752) rotate(-86)">120° 0' W</text><text transform="translate(1836 1016) rotate(-55)">130° 0' W</text><text transform="translate(1850 1012) rotate(-48)">140° 0' W</text></g><path fill="none" stroke="#FF0000" stroke-width="2.0" d="M1756.0,995.0 1757.6,976.5 1758.0,958.2 1757.1,939.7 1755.0,921.3 1751.7,903.0 1747.1,884.6 1741.3,866.2 1734.3,847.7 1726.0,829.3 1716.5,811.1 1705.7,792.7 1693.7,774.4 1680.6,756.3 1666.3,738.3 1650.9,720.5 1634.3,702.8 1616.1,684.9 1597.1,667.4 1576.9,650.2 1555.7,633.2 1533.4,616.5 1510.4,600.3 1486.4,584.5 1461.5,569.0 1435.9,554.1 1409.5,539.6 1382.5,525.8 1354.8,512.5 1327.0,500.0 1298.5,488.1 1269.7,476.9 1241.0,466.5M1798.8,994.6 1804.5,972.8 1808.5,951.1 1811.0,929.5 1811.9,907.9 1811.2,886.5 1808.8,865.2 1804.8,844.2 1799.4,823.7 1792.1,803.1 1783.4,783.0 1773.1,763.2 1761.4,743.9 1748.0,724.9 1733.1,706.1 1716.7,687.9 1698.7,669.9 1678.9,652.1 1657.6,634.8 1635.1,618.2 1610.9,601.9 1585.5,586.4 1558.8,571.4 1530.9,557.2 1501.8,543.7 1471.7,530.9 1440.6,518.9 1408.8,507.9 1376.1,497.7 1343.0,488.4 1309.2,480.1 1275.4,472.8 1241.0,466.5M1827.1,994.9 1837.1,968.7 1845.1,942.7 1851.3,916.4 1855.4,890.5 1857.7,864.6 1857.9,839.4 1856.1,814.8 1854.5,802.7 1852.3,790.6 1849.7,778.8 1846.6,767.1 1843.1,755.7 1839.0,744.4 1834.4,733.0 1829.4,722.1 1823.8,711.2 1817.9,700.7 1804.6,680.0 1789.4,660.2 1772.4,641.2 1753.4,622.8 1732.3,605.0 1709.6,588.4 1684.8,572.4 1658.6,557.6 1630.6,543.7 1600.8,530.7 1569.8,519.0 1537.1,508.2 1503.2,498.6 1467.8,490.2 1431.8,483.1 1394.8,477.2 1357.0,472.5 1318.8,469.2 1279.9,467.2 1241.0,466.5M1845.6,994.9 1852.7,979.8 1859.4,964.2 1865.5,949.1 1871.1,933.5 1876.2,917.7 1880.6,902.3 1884.6,886.7 1888.0,870.9 1890.7,855.6 1892.8,840.3 1894.4,824.9 1895.4,810.1 1895.8,795.3 1895.6,780.5 1894.8,765.8 1893.4,751.3 1891.5,737.3 1889.0,723.5 1885.8,709.8 1882.2,696.8 1878.0,683.9 1873.2,671.2 1867.8,658.8 1861.9,646.9 1855.5,635.3 1848.5,623.8 1840.8,612.7 1832.8,602.1 1824.2,591.7 1814.9,581.6 1805.3,572.0 1795.1,562.7 1784.3,553.6 1773.2,545.1 1761.4,536.8 1749.1,528.9 1736.4,521.4 1723.1,514.2 1709.2,507.3 1695.0,500.9 1680.2,494.8 1665.1,489.2 1649.4,483.8 1633.1,478.9 1599.4,470.2 1564.3,463.2 1527.3,457.7 1488.8,453.9 1449.3,451.8 1408.9,451.4 1367.6,452.6 1325.7,455.6 1283.4,460.3 1241.0,466.5M1858.4,994.0 1867.4,976.4 1875.5,959.1 1883.2,941.1 1890.1,923.6 1896.6,905.5 1902.5,886.9 1907.6,868.9 1912.1,850.6 1916.0,832.0 1919.2,814.2 1921.6,796.2 1923.5,778.2 1924.6,760.2 1925.1,743.0 1924.8,725.3 1923.9,708.5 1922.4,691.8 1920.2,675.5 1917.3,659.4 1913.7,643.7 1909.5,628.4 1904.7,613.5 1899.2,599.1 1893.0,585.1 1886.2,571.6 1878.8,558.5 1870.8,546.0 1862.4,534.3 1853.2,522.8 1843.4,511.8 1832.9,501.3 1822.1,491.6 1811.0,482.6 1799.3,474.1 1787.1,466.0 1774.2,458.5 1760.8,451.4 1747.1,445.1 1732.8,439.2 1717.9,433.7 1702.5,428.9 1686.4,424.5 1670.2,420.7 1653.3,417.4 1635.9,414.7 1618.2,412.5 1600.0,410.9 1581.3,409.8 1562.0,409.3 1542.5,409.3 1522.4,409.9 1502.3,411.0 1481.6,412.7 1460.4,414.9 1439.1,417.7 1417.7,421.0 1374.0,429.4 1329.8,439.8 1285.3,452.2 1241.0,466.5M1867.3,993.7 1877.8,973.7 1887.4,954.0 1896.0,934.6 1904.3,914.1 1911.7,894.1 1918.6,873.2 1924.5,852.9 1929.9,832.0 1934.6,810.6 1938.4,789.9 1941.5,769.0 1943.8,748.9 1945.4,727.6 1946.1,707.4 1946.2,687.2 1945.4,667.2 1943.9,647.5 1941.6,627.4 1938.6,608.6 1934.7,589.5 1930.1,571.1 1924.8,553.4 1918.8,536.4 1912.0,519.6 1904.5,503.6 1896.4,488.4 1887.7,474.1 1878.2,460.2 1868.1,447.2 1857.5,435.0 1846.3,423.7 1834.3,412.9 1822.7,403.7 1810.5,395.2 1797.9,387.3 1784.5,380.1 1770.9,373.7 1756.8,368.0 1742.2,363.0 1726.9,358.6 1711.0,354.9 1694.9,352.1 1678.0,349.8 1661.0,348.4 1643.4,347.6 1625.4,347.6 1606.9,348.2 1587.9,349.6 1568.4,351.7 1548.4,354.5 1528.0,358.1 1507.4,362.4 1486.4,367.3 1465.0,373.0 1443.2,379.5 1421.3,386.5 1399.0,394.3 1376.8,402.8 1354.2,411.9 1331.6,421.6 1309.2,431.9 1286.4,442.8 1263.8,454.3 1241.0,466.5M1957.0,733.4 1958.7,714.8 1959.9,695.4 1960.5,676.8 1960.5,657.7 1960.0,639.3 1958.9,620.6 1957.3,602.8 1955.1,584.7 1952.3,566.6 1949.1,549.5 1945.1,531.5 1940.7,514.6 1935.8,497.9 1930.4,481.6 1924.4,465.7 1917.9,450.2 1911.0,435.2 1903.8,421.4 1896.0,407.5 1887.7,394.3 1879.3,382.1 1870.2,370.2 1860.8,358.9 1851.0,348.3 1840.9,338.4 1830.5,329.2 1819.7,320.7 1808.6,312.9 1797.2,305.8 1785.5,299.4 1773.5,293.7 1760.9,288.6 1748.5,284.4 1736.2,280.9 1723.5,278.0 1710.5,275.8 1697.1,274.1 1683.5,273.2 1669.4,272.8 1655.1,273.1 1640.4,274.1 1625.6,275.6 1610.5,277.9 1595.1,280.7 1579.3,284.2 1563.5,288.3 1547.3,293.0 1530.7,298.4 1513.8,304.5 1496.6,311.2 1461.5,326.6 1425.7,344.3 1389.3,364.4 1352.5,386.8 1315.3,411.4 1278.2,437.9 1241.0,466.5M1945.0,468.6 1935.5,438.4 1924.6,409.4 1912.1,381.0 1898.2,353.9 1883.5,329.1 1867.4,305.4 1850.4,283.9 1841.3,273.6 1832.3,264.2 1823.2,255.3 1813.8,247.0 1804.2,239.1 1794.7,232.1 1784.8,225.3 1775.0,219.3 1765.0,213.9 1754.8,209.0 1744.5,204.7 1734.0,200.9 1723.4,197.7 1712.8,195.2 1702.1,193.1 1691.2,191.7 1680.2,190.8 1668.9,190.5 1657.7,190.7 1646.6,191.5 1635.0,192.8 1623.5,194.7 1611.7,197.2 1599.7,200.2 1575.3,207.8 1550.2,217.7 1524.4,229.9 1498.2,244.1 1471.2,260.6 1443.5,279.4 1415.1,300.5 1386.3,323.7 1357.5,348.6 1328.4,375.5 1299.1,404.3 1269.9,434.7 1241.0,466.5M1413.5,122.0 1403.2,136.3 1392.9,151.6 1371.8,185.3 1350.4,223.1 1328.8,264.6 1306.7,310.4 1284.7,359.5 1262.7,411.6 1241.0,466.5M1321.0,122.2 1311.3,154.7 1301.5,190.3 1291.4,229.3 1281.4,271.3 1271.2,316.3 1261.1,364.0 1251.0,414.3 1241.0,466.5M1241.0,122.2 1241.0,466.5M1161.0,122.2 1170.7,154.7 1180.5,190.3 1190.6,229.3 1200.6,271.3 1210.8,316.3 1220.9,364.0 1231.0,414.3 1241.0,466.5M1068.5,122.0 1078.8,136.3 1089.1,151.6 1110.2,185.3 1131.6,223.1 1153.2,264.6 1175.3,310.4 1197.3,359.5 1219.3,411.6 1241.0,466.5M653.2,215.8 667.3,200.0 681.8,185.2 696.5,171.6 711.4,159.1 726.4,147.9 741.4,138.1 756.3,129.5 771.5,122.1M924.6,122.0 942.4,130.5 960.5,140.8 978.8,152.8 997.4,166.5 1016.4,182.1 1035.8,199.6 1055.3,218.7 1075.3,239.7 1095.6,262.5 1116.1,287.0 1136.8,313.3 1157.7,341.2 1178.6,370.5 1199.6,401.4 1220.5,433.6 1241.0,466.5M653.3,260.6 666.8,248.2 680.6,236.9 694.8,226.9 709.4,218.0 724.2,210.4 739.1,204.1 754.6,198.9 770.1,195.0 785.9,192.3 801.8,190.8 818.4,190.5 835.1,191.5 852.2,193.6 869.7,197.0 887.4,201.6 905.6,207.4 924.5,214.6 943.6,223.0 963.2,232.7 983.3,243.8 1003.6,256.0 1024.1,269.4 1045.2,284.2 1066.4,300.1 1087.8,317.1 1109.6,335.5 1131.6,355.0 1153.4,375.3 1175.5,396.9 1197.4,419.2 1219.4,442.6 1241.0,466.5M653.0,327.9 665.3,318.5 678.0,309.9 691.2,302.2 704.8,295.4 718.7,289.5 733.2,284.4 748.0,280.3 763.5,277.1 779.3,274.7 795.4,273.3 811.9,272.8 828.8,273.2 846.0,274.5 863.9,276.7 881.9,279.7 900.5,283.7 919.5,288.6 939.2,294.4 959.2,301.2 979.6,308.9 1000.4,317.5 1021.5,327.0 1042.9,337.4 1064.3,348.6 1086.0,360.6 1108.0,373.5 1130.2,387.2 1152.3,401.6 1174.6,416.8 1196.7,432.7 1219.0,449.3 1241.0,466.5M653.1,408.5 664.8,399.7 677.0,391.6 689.7,384.2 702.9,377.4 716.6,371.3 730.7,366.0 745.4,361.3 760.5,357.3 776.1,353.9 792.3,351.3 808.9,349.3 826.0,348.1 843.5,347.5 861.3,347.7 879.9,348.5 898.6,350.0 918.1,352.3 937.7,355.2 957.8,358.9 978.4,363.2 999.1,368.2 1020.2,373.9 1041.6,380.3 1063.2,387.4 1085.1,395.1 1107.3,403.6 1129.6,412.6 1151.8,422.2 1173.9,432.4 1196.3,443.2 1218.5,454.5 1241.0,466.5M653.0,597.3 663.0,585.9 673.4,575.1 684.5,564.7 696.3,554.7 708.8,545.1 722.0,535.9 735.8,527.1 750.1,518.9 765.0,511.1 780.7,503.7 797.0,496.7 813.6,490.3 830.9,484.4 848.9,478.9 867.2,473.9 886.2,469.4 905.8,465.3 925.7,461.8 946.2,458.8 967.3,456.2 988.6,454.2 1010.6,452.7 1032.7,451.8 1055.0,451.3 1077.4,451.4 1100.3,452.0 1123.4,453.1 1146.8,454.8 1170.4,457.0 1193.9,459.7 1241.0,466.5M654.9,994.9 653.1,990.4M653.1,721.1 660.6,706.8 668.7,693.1 677.8,679.5 687.6,666.4 698.4,653.4 709.8,641.0 722.0,628.9 735.1,617.1 748.9,605.7 763.6,594.6 779.1,583.9 795.1,573.7 812.2,563.7 829.8,554.3 848.2,545.2 867.0,536.7 887.0,528.4 907.3,520.7 928.4,513.4 949.9,506.7 972.2,500.4 995.1,494.6 1018.3,489.3 1041.8,484.6 1065.9,480.4 1090.3,476.7 1114.9,473.6 1140.0,471.1 1164.8,469.1 1190.2,467.7 1215.6,466.8 1241.0,466.5M683.2,994.6 677.5,972.8 673.5,951.1 671.0,929.5 670.1,907.9 670.8,886.5 673.2,865.2 677.2,844.2 682.6,823.7 689.9,803.1 698.6,783.0 708.9,763.2 720.6,743.9 734.0,724.9 748.9,706.1 765.3,687.9 783.3,669.9 803.1,652.1 824.4,634.8 846.9,618.2 871.1,601.9 896.5,586.4 923.2,571.4 951.1,557.2 980.2,543.7 1010.3,530.9 1041.4,518.9 1073.2,507.9 1105.9,497.7 1139.0,488.4 1172.8,480.1 1206.6,472.8 1241.0,466.5M726.0,995.0 724.4,976.5 724.0,958.2 724.9,939.7 727.0,921.3 730.3,903.0 734.9,884.6 740.7,866.2 747.7,847.7 756.0,829.3 765.5,811.1 776.3,792.7 788.3,774.4 801.4,756.3 815.7,738.3 831.1,720.5 847.7,702.8 865.9,684.9 884.9,667.4 905.1,650.2 926.3,633.2 948.6,616.5 971.6,600.3 995.6,584.5 1020.5,569.0 1046.1,554.1 1072.5,539.6 1099.5,525.8 1127.2,512.5 1155.0,500.0 1183.5,488.1 1212.3,476.9 1241.0,466.5M785.3,994.9 786.7,978.9 789.1,962.7 792.3,946.4 796.5,930.0 801.5,913.4 807.6,896.3 814.5,879.4 822.3,862.4 831.0,845.3 840.6,828.0 851.1,810.6 862.5,793.0 874.8,775.4 887.8,757.9 901.6,740.4 916.4,722.8 932.0,705.2 948.6,687.5 965.7,670.0 983.6,652.6 1002.2,635.5 1021.5,618.4 1041.3,601.7 1061.9,585.0 1083.0,568.7 1104.5,552.9 1126.3,537.4 1148.9,522.1 1171.8,507.3 1194.6,493.2 1217.7,479.6 1241.0,466.5M857.6,994.9 860.7,980.0 864.4,965.1 868.9,949.6 874.0,934.0 879.7,918.2 886.0,902.4 900.5,869.8 917.7,836.4 937.2,802.5 959.3,767.9 983.4,733.2 1010.0,698.1 1038.5,663.1 1069.0,628.1 1101.0,593.9 1134.5,560.3 1169.2,527.7 1204.8,496.4 1241.0,466.5M935.9,994.9 943.4,966.1 952.9,936.0 964.0,905.0 976.8,873.3 991.4,840.4 1007.5,807.1 1025.3,773.0 1044.6,738.5 1065.4,703.5 1087.4,668.7 1110.7,633.8 1135.2,599.0 1160.6,564.7 1186.8,531.1 1213.7,498.2 1241.0,466.5M1014.9,994.7 1021.5,966.4 1029.3,936.8 1038.4,906.1 1048.5,874.7 1059.7,842.2 1072.0,809.0 1085.4,775.2 1099.7,740.9 1114.9,706.2 1131.1,671.1 1147.9,636.2 1165.5,601.4 1183.6,566.9 1202.3,532.8 1221.5,499.2 1241.0,466.5M1092.0,995.0 1096.8,966.7 1102.3,937.2 1115.5,875.2 1131.3,810.0 1149.5,742.3 1170.0,672.9 1192.3,603.0 1216.1,533.7 1241.0,466.5M1241.0,994.7 1241.0,466.5M1314.9,994.8 1309.5,937.1 1302.9,875.4 1294.9,810.2 1285.9,742.9 1275.8,673.5 1264.9,603.8 1253.2,534.5 1241.0,466.5M1390.0,995.0 1385.2,966.7 1379.7,937.2 1366.5,875.2 1350.7,810.0 1332.5,742.3 1312.0,672.9 1289.7,603.0 1265.9,533.7 1241.0,466.5M1467.1,994.7 1460.5,966.4 1452.7,936.8 1443.6,906.1 1433.5,874.7 1422.3,842.2 1410.0,809.0 1396.6,775.2 1382.3,740.9 1367.1,706.2 1350.9,671.1 1334.1,636.2 1316.5,601.4 1298.4,566.9 1279.7,532.8 1260.5,499.2 1241.0,466.5M1546.1,994.9 1538.6,966.1 1529.1,936.0 1518.0,905.0 1505.2,873.3 1490.6,840.4 1474.5,807.1 1456.7,773.0 1437.4,738.5 1416.6,703.5 1394.6,668.7 1371.3,633.8 1346.8,599.0 1321.4,564.7 1295.2,531.1 1268.3,498.2 1241.0,466.5M1624.4,994.9 1621.3,980.0 1617.6,965.1 1613.1,949.6 1608.0,934.0 1602.3,918.2 1596.0,902.4 1581.5,869.8 1564.3,836.4 1544.8,802.5 1522.7,767.9 1498.6,733.2 1472.0,698.1 1443.5,663.1 1413.0,628.1 1381.0,593.9 1347.5,560.3 1312.8,527.7 1277.2,496.4 1241.0,466.5M1696.7,994.9 1695.3,978.9 1692.9,962.7 1689.7,946.4 1685.5,930.0 1680.5,913.4 1674.4,896.3 1667.5,879.4 1659.7,862.4 1651.0,845.3 1641.4,828.0 1630.9,810.6 1619.5,793.0 1607.2,775.4 1594.2,757.9 1580.4,740.4 1565.6,722.8 1550.0,705.2 1533.4,687.5 1516.3,670.0 1498.4,652.6 1479.8,635.5 1460.5,618.4 1440.7,601.7 1420.1,585.0 1399.0,568.7 1377.5,552.9 1355.7,537.4 1333.1,522.1 1310.2,507.3 1287.4,493.2 1264.3,479.6 1241.0,466.5M1847.2,995.0 1861.3,975.3 1874.8,954.9 1887.2,934.6 1899.0,913.5 1909.8,892.6 1919.9,870.8 1929.1,849.1 1937.6,826.6M1808.7,994.5 1820.3,979.9 1831.5,965.0 1842.5,949.6 1853.0,933.7 1863.2,917.4 1872.5,901.5 1881.4,885.3 1889.9,868.5 1898.0,851.3 1905.3,834.7 1912.2,817.6 1918.6,800.1 1924.7,782.1 1929.9,764.9 1934.7,747.1 1939.1,729.0 1943.0,710.3 1946.2,692.5 1949.0,674.2 1951.2,655.4 1952.9,636.2 1954.0,617.9 1954.6,599.2 1954.6,580.0 1954.0,560.3 1952.9,541.7 1951.3,522.7 1949.2,504.8 1946.5,486.6 1943.3,467.9 1939.4,448.9 1935.2,431.2M653.6,969.2 673.3,994.5M1762.3,994.5 1782.2,972.0 1801.3,948.2 1818.7,924.2 1835.3,899.2 1850.2,873.9 1864.2,847.6 1877.0,820.3 1888.3,792.9 1898.4,764.5 1907.0,736.2 1914.3,707.0 1920.1,678.0 1924.6,648.0 1927.6,618.5 1929.1,589.4 1929.2,559.6 1927.9,530.4 1925.2,500.4 1921.1,471.3 1915.6,441.5 1908.7,412.7 1900.3,383.4 1890.8,355.3 1879.6,326.7 1867.5,299.6 1853.8,272.2 1838.2,244.6 1822.0,218.7 1804.1,192.9 1785.7,168.8 1765.8,145.0 1745.7,123.1M736.3,123.1 713.3,148.4 692.2,174.0 671.7,201.5 653.3,229.1M653.4,909.5 668.4,931.5 684.7,953.4 701.9,974.4 719.7,994.5M1757.2,940.9 1775.1,918.7 1791.5,896.3 1807.0,873.0 1821.5,848.7 1834.5,824.5 1846.5,799.4 1857.5,773.4 1867.0,747.6 1875.4,721.1 1882.6,693.7 1888.4,666.8 1892.9,639.2 1896.1,612.1 1898.1,584.4 1898.7,556.1 1898.0,528.6 1896.1,500.5 1892.9,473.4 1888.3,445.9 1882.4,418.0 1875.4,391.3 1866.9,364.3 1857.0,337.1 1846.3,311.3 1834.1,285.4 1821.2,261.1 1807.0,236.8 1791.3,212.6 1774.2,188.7 1756.8,166.5 1738.1,144.7 1717.9,123.4M764.1,123.4 747.9,140.4 732.5,157.8 718.1,175.4 703.4,194.7 689.6,214.1 676.9,233.7 665.1,253.5 653.4,274.8M653.3,835.7 665.6,857.5 678.7,878.6 693.1,899.9 708.2,920.4 724.1,940.1 740.6,958.9 757.7,977.0 776.2,995.0M1705.8,995.0 1719.7,981.6 1732.5,968.5 1745.1,954.9 1757.2,940.9M1747.1,884.5 1762.5,863.3 1777.0,841.3 1790.6,818.4 1802.8,795.6 1814.0,772.1 1824.2,747.9 1833.0,724.0 1840.8,699.4 1847.5,674.2 1852.9,649.5 1857.2,624.3 1860.3,598.5 1862.3,572.2 1863.1,546.7 1862.7,520.8 1861.0,494.5 1858.1,467.9 1854.1,442.3 1848.8,416.4 1842.5,391.8 1835.1,367.0 1826.3,342.1 1816.3,317.2 1805.6,293.8 1793.6,270.4 1780.4,247.2 1765.8,224.2 1751.0,202.8 1734.9,181.7 1717.6,161.0 1699.1,140.8 1680.7,122.3M801.3,122.3 777.0,147.1 754.5,172.6 744.0,185.6 733.0,200.1 713.5,228.2 696.0,256.7 679.8,286.9 665.7,317.2 659.4,332.5 653.1,349.0M653.3,736.0 660.4,754.3 668.5,773.2 677.2,791.6 686.5,809.6 696.4,827.0 706.8,844.1 717.6,860.6 729.7,877.5 742.2,893.9 755.3,909.8 768.8,925.1 782.7,939.8 797.1,954.0 812.7,968.4 827.9,981.5 844.3,994.7M1637.7,994.7 1653.3,982.2 1667.7,969.8 1682.6,956.2 1696.3,942.9 1709.6,929.0 1722.5,914.7 1735.0,899.8 1747.1,884.5M1727.3,832.1 1740.8,811.8 1753.4,790.8 1765.1,769.1 1775.5,747.7 1784.9,725.6 1793.5,702.9 1801.0,679.6 1807.5,655.7 1812.9,631.3 1817.0,607.5 1820.1,583.2 1821.9,559.7 1822.8,534.7 1822.4,510.5 1820.9,486.0 1818.4,462.5 1814.8,438.8 1810.0,415.0 1804.1,391.1 1797.0,367.1 1789.1,344.3 1780.0,321.7 1769.8,299.1 1758.4,276.7 1746.5,255.7 1733.5,235.0 1719.5,214.6 1704.3,194.5 1688.0,174.9 1671.7,156.9 1654.3,139.4 1636.0,122.4M846.0,122.4 822.1,144.8 800.0,168.1 778.6,193.3 759.1,219.3 741.5,245.9 724.9,274.2 710.4,302.8 697.8,331.7 686.7,362.0 677.5,392.3 670.1,423.8 664.6,455.0 661.1,486.0 659.4,517.8 659.6,549.0 661.7,580.9 665.7,612.0 671.7,643.6 679.4,674.2 688.9,703.9 700.4,733.7 713.5,762.3 728.6,790.8 745.3,818.1 763.3,844.0 783.3,869.5 804.7,893.6 827.2,916.3 850.8,937.6 876.3,958.0 902.8,976.8 931.0,994.6M1551.0,994.6 1576.7,978.5 1601.6,961.0 1625.7,942.1 1648.8,921.9 1670.2,901.1 1690.6,879.0 1709.8,855.7 1727.3,832.1M1665.1,736.9 1675.7,718.2 1685.5,699.0 1694.4,679.2 1702.4,658.9 1709.5,638.1 1715.2,617.7 1720.3,596.0 1724.1,574.8 1726.8,553.2 1728.5,531.4 1729.2,509.3 1728.7,488.0 1727.2,466.5 1724.6,444.9 1721.0,423.2 1716.4,402.5 1710.8,381.9 1704.2,361.3 1696.5,340.8 1687.7,320.5 1677.8,300.5 1667.4,281.7 1655.4,262.2 1643.0,244.1 1629.6,226.4 1615.2,209.2 1599.8,192.5 1584.4,177.3 1568.2,162.6 1551.2,148.5 1533.3,135.2 1514.8,122.5M967.2,122.5 945.6,137.3 924.1,153.9 903.8,171.5 884.7,190.0 866.8,209.2 849.5,230.1 833.7,251.7 819.3,273.9 806.3,296.5 794.3,320.5 783.9,344.9 775.0,369.5 767.7,394.3 761.6,420.1 757.2,445.9 754.3,471.6 753.0,497.1 753.1,523.4 754.8,549.3 758.1,575.7 762.7,600.7 769.0,626.1 776.7,650.8 786.1,675.7 796.5,699.0 808.5,722.3 821.8,744.8 836.8,767.0 853.0,788.2 870.3,808.4 888.6,827.5 907.9,845.4 928.1,862.2 949.8,878.3 972.4,893.2 995.7,906.8 1019.7,919.1 1045.1,930.4 1070.1,939.9 1096.5,948.4 1122.5,955.2 1149.6,960.8 1176.9,965.0 1204.4,967.7 1232.1,968.9 1259.7,968.6 1287.3,966.9 1314.8,963.7 1342.1,959.0 1369.1,952.9 1395.7,945.3 1421.1,936.6 1446.8,926.2 1471.2,914.7 1494.9,902.0 1518.0,887.9 1540.2,872.6 1561.0,856.5 1581.5,838.7 1600.5,820.4 1618.4,800.9 1635.3,780.3 1651.0,758.7 1665.1,736.9M1624.9,693.4 1634.9,674.7 1643.9,655.4 1651.9,635.6 1658.6,616.0 1664.3,596.0 1668.9,575.6 1672.5,554.8 1675.0,533.7 1676.4,512.3 1676.6,491.6 1675.6,470.7 1673.6,449.7 1670.4,428.7 1666.2,408.5 1660.7,387.5 1654.3,367.5 1646.7,347.7 1638.1,328.1 1628.3,308.8 1617.9,290.7 1606.5,272.9 1594.1,255.6 1580.7,238.8 1566.3,222.6 1550.9,206.9 1535.4,192.7 1518.3,178.4 1501.1,165.5 1483.2,153.5 1464.6,142.2 1445.3,131.8 1425.4,122.3M1056.6,122.3 1033.7,133.3 1011.7,145.5 990.6,158.8 969.7,173.8 949.8,189.9 931.1,206.9 913.6,224.9 897.4,243.6 882.4,263.0 868.3,283.9 855.6,305.3 844.3,327.2 834.5,349.5 825.9,373.0 818.8,396.6 813.2,420.4 809.1,444.2 806.5,468.9 805.4,493.4 805.9,517.7 807.8,541.7 811.3,566.1 816.2,590.1 822.6,613.5 830.4,636.4 839.8,659.3 850.6,681.5 862.6,702.9 875.8,723.4 890.7,743.6 906.7,762.8 923.8,781.0 941.8,798.1 961.5,814.6 981.3,829.3 1002.6,843.3 1024.7,856.1 1047.4,867.5 1070.8,877.6 1094.6,886.4 1118.9,893.8 1144.3,900.0 1169.3,904.6 1195.3,907.9 1220.6,909.8 1246.7,910.2 1272.9,909.1 1298.1,906.7 1324.0,902.7 1348.8,897.4 1374.1,890.6 1398.2,882.6 1421.8,873.2 1444.9,862.5 1467.4,850.5 1489.1,837.2 1510.1,822.6 1529.5,807.3 1548.7,790.3 1566.3,772.7 1582.9,754.0 1597.9,735.0 1612.2,714.3 1624.9,693.4M1579.9,652.6 1589.2,633.8 1597.1,615.1 1604.0,595.8 1609.8,576.1 1614.3,556.0 1617.6,536.2 1619.7,516.1 1620.7,495.8 1620.4,475.4 1619.0,455.6 1616.3,434.9 1612.4,415.1 1607.4,395.3 1601.1,375.7 1593.7,356.3 1585.3,337.9 1575.9,319.9 1565.3,302.3 1553.7,285.1 1540.9,268.5 1527.1,252.5 1512.9,237.8 1497.1,223.2 1481.0,210.0 1464.2,197.6 1446.5,186.0 1428.1,175.4 1409.0,165.8 1389.3,157.1 1369.0,149.6 1348.3,143.1 1328.0,138.0 1306.6,133.8 1285.8,130.9 1263.9,129.0 1242.9,128.3 1221.9,128.8 1200.9,130.3 1180.1,133.0 1158.6,137.0 1138.3,141.8 1117.5,148.1 1098.0,155.1 1078.1,163.4 1058.8,172.8 1040.2,183.2 1022.4,194.5 1005.3,206.7 989.0,219.7 973.6,233.5 959.1,248.0 945.0,263.8 931.9,280.2 920.0,297.2 909.1,314.7 899.3,332.6 890.6,350.9 882.8,370.2 876.2,389.8 870.9,409.5 866.7,429.3 863.6,450.0 861.9,469.8 861.3,490.3 861.6,505.2 862.6,520.0 864.2,534.7 866.5,549.9 869.4,564.2 873.0,579.1 877.3,593.7 882.2,608.0 887.7,622.1 893.8,635.8 900.4,649.3 908.0,663.0 915.7,675.8 924.4,688.7 933.1,700.7 942.8,712.9 952.5,724.0 963.2,735.3 974.2,746.0 985.8,756.3 997.7,766.1 1010.0,775.4 1022.6,784.2 1036.3,792.8 1049.6,800.5 1063.8,808.0 1077.7,814.6 1092.5,820.9 1106.9,826.3 1122.2,831.4 1136.9,835.6 1152.5,839.5 1167.6,842.6 1183.4,845.2 1199.4,847.2 1215.4,848.5 1231.5,849.2 1247.6,849.3 1263.6,848.7 1279.0,847.6 1294.9,845.7 1310.8,843.3 1326.6,840.1 1341.5,836.6 1357.0,832.2 1371.6,827.5 1386.7,821.9 1400.9,816.1 1415.5,809.3 1429.2,802.3 1442.6,794.7 1455.7,786.6 1469.0,777.6 1481.4,768.4 1493.4,758.7 1505.1,748.5 1516.2,737.9 1527.0,726.7 1537.3,715.1 1546.6,703.6 1555.9,691.2 1564.3,678.9 1572.5,665.6 1579.9,652.6M1530.5,614.4 1536.3,602.2 1541.6,589.8 1546.3,577.1 1550.4,564.2 1553.9,551.0 1556.8,537.6 1559.0,524.1 1560.6,511.0 1561.6,497.2 1562.0,484.0 1561.7,470.6 1560.8,457.3 1559.3,443.9 1557.2,430.5 1554.4,417.2 1551.0,403.9 1546.9,390.7 1542.5,378.3 1537.2,365.4 1531.5,353.3 1525.0,340.8 1518.1,329.1 1510.8,317.6 1502.8,306.5 1494.4,295.6 1485.3,285.0 1475.8,274.8 1466.3,265.5 1455.8,256.1 1445.4,247.5 1434.0,239.0 1422.8,231.3 1410.5,223.6 1398.6,216.9 1386.3,210.6 1373.7,204.8 1360.1,199.3 1347.0,194.6 1333.7,190.5 1320.1,186.9 1306.4,183.8 1292.5,181.4 1278.6,179.5 1264.5,178.2 1250.4,177.5 1236.3,177.4 1222.2,177.9 1208.1,179.0 1194.1,180.7 1180.2,183.0 1166.4,185.8 1152.8,189.2 1139.4,193.2 1126.2,197.7 1113.2,202.7 1099.9,208.6 1087.5,214.7 1074.7,221.7 1063.0,228.8 1051.1,236.8 1040.2,244.8 1029.1,253.7 1019.0,262.5 1008.8,272.2 997.2,284.5 986.3,297.3 976.2,310.6 966.5,324.8 958.1,338.9 950.2,353.9 943.5,368.6 937.3,384.2 932.2,400.0 927.9,415.9 924.6,431.9 922.2,447.9 920.7,464.0 920.0,480.6 920.4,497.2 921.7,513.7 923.9,529.9 927.0,545.9 930.9,561.7 936.0,577.7 941.9,593.4 948.7,608.6 956.3,623.4 964.6,637.8 973.8,651.6 983.7,664.8 994.2,677.5 1005.9,690.0 1017.7,701.5 1030.6,712.6 1044.1,723.1 1058.1,732.8 1072.6,741.8 1087.6,750.0 1103.0,757.4 1119.3,764.2 1135.3,770.0 1151.7,774.9 1168.2,779.0 1185.6,782.3 1202.5,784.7 1220.2,786.2 1237.2,786.8 1254.9,786.6 1272.6,785.4 1289.5,783.4 1307.0,780.4 1323.6,776.6 1340.6,771.9 1356.8,766.4 1372.7,760.2 1388.2,753.1 1403.3,745.2 1418.0,736.6 1432.2,727.2 1445.9,717.0 1459.1,706.1 1471.2,694.9 1483.1,682.7 1494.0,670.2 1504.5,656.7 1513.9,643.1 1522.6,629.0 1530.5,614.4M1477.6,578.9 1483.3,565.9 1488.1,553.1 1492.2,540.0 1495.5,526.7 1498.0,513.1 1499.7,499.4 1500.6,485.5 1500.7,472.0 1500.0,458.0 1498.5,444.5 1496.2,431.0 1493.1,417.7 1489.2,404.4 1484.5,391.3 1479.1,378.4 1473.1,366.2 1466.1,353.9 1458.6,342.3 1450.2,330.7 1441.3,319.9 1431.9,309.6 1421.8,299.8 1411.1,290.4 1399.8,281.6 1388.0,273.5 1375.7,265.9 1363.0,259.0 1350.4,253.0 1336.8,247.4 1323.6,242.8 1309.4,238.7 1295.6,235.5 1281.0,232.9 1266.9,231.2 1252.8,230.2 1238.5,230.0 1224.3,230.5 1209.5,231.8 1195.5,233.8 1181.0,236.7 1167.3,240.2 1153.2,244.5 1140.0,249.4 1126.6,255.3 1114.2,261.5 1101.6,268.7 1089.5,276.5 1077.9,284.9 1066.8,293.9 1056.4,303.4 1046.5,313.4 1037.3,323.9 1028.7,334.8 1020.5,346.6 1013.3,358.3 1006.6,370.8 1000.9,383.0 995.7,396.0 991.3,409.1 987.7,422.5 984.9,435.9 982.9,449.4 981.7,462.9 981.2,476.9 982.2,497.8 984.9,518.4 989.6,539.0 996.0,559.1 1004.2,578.4 1014.3,597.3 1025.6,614.8 1038.8,631.7 1053.3,647.3 1069.1,661.7 1086.0,674.7 1104.4,686.5 1123.8,696.8 1143.9,705.4 1164.7,712.3 1186.0,717.6 1207.6,721.1 1229.5,722.9 1252.0,723.0 1273.9,721.2 1295.5,717.7 1316.8,712.5 1337.6,705.6 1357.8,697.0 1377.1,686.8 1395.1,675.3 1412.5,662.0 1428.3,647.7 1442.9,632.1 1456.1,615.3 1467.7,597.3 1477.6,578.9M1421.6,546.2 1427.0,532.8 1431.4,519.0 1434.6,504.9 1436.6,490.9 1437.5,476.3 1437.3,462.1 1435.8,447.8 1433.2,433.6 1429.5,419.6 1424.7,406.2 1418.7,392.7 1411.8,380.1 1403.8,367.9 1394.9,356.3 1385.0,345.3 1374.5,335.4 1362.9,325.9 1350.9,317.6 1337.8,309.9 1324.5,303.3 1310.7,297.7 1296.4,293.2 1281.8,289.7 1267.0,287.2 1252.0,285.9 1236.9,285.6 1221.8,286.5 1206.9,288.4 1192.2,291.5 1177.8,295.5 1163.7,300.7 1149.8,307.0 1139.5,312.5 1129.6,318.5 1120.2,325.1 1111.2,332.2 1102.6,339.8 1094.6,347.8 1087.1,356.3 1079.9,365.5 1073.6,374.6 1067.6,384.5 1062.5,394.2 1057.9,404.6 1053.9,415.2 1050.6,426.0 1048.1,436.8 1046.2,447.8 1045.0,458.8 1044.5,469.8 1044.6,480.8 1045.5,492.1 1047.1,502.9 1049.3,514.0 1052.3,524.8 1056.0,535.4 1060.2,545.8 1065.2,555.9 1070.7,565.6 1077.0,575.3 1083.7,584.3 1091.1,593.2 1098.9,601.3 1107.3,609.2 1116.0,616.3 1125.4,623.2 1135.1,629.5 1145.3,635.3 1155.7,640.4 1166.5,644.9 1177.5,648.8 1188.7,652.1 1200.1,654.8 1211.6,656.7 1223.3,658.1 1234.9,658.7 1247.1,658.7 1258.7,658.1 1270.4,656.7 1281.9,654.8 1293.3,652.1 1304.5,648.8 1315.5,644.9 1326.3,640.4 1336.7,635.3 1346.9,629.5 1356.6,623.2 1365.7,616.6 1374.7,609.2 1382.9,601.6 1390.9,593.2 1398.1,584.6 1405.0,575.3 1411.1,565.9 1416.7,556.2 1421.6,546.2M1363.1,516.4 1367.9,503.4 1371.1,490.0 1372.7,476.2 1372.7,462.3 1371.1,448.6 1367.9,435.2 1363.2,422.1 1357.0,409.5 1349.2,397.6 1340.4,386.8 1330.2,376.9 1319.0,368.1 1306.8,360.6 1294.0,354.4 1280.3,349.5 1266.3,346.2 1251.8,344.3 1237.4,343.9 1223.1,345.0 1208.7,347.7 1194.9,351.8 1181.5,357.3 1168.9,364.3 1157.1,372.5 1146.5,381.8 1136.9,392.2 1128.7,403.5 1121.7,415.7 1116.2,428.6 1112.3,441.9 1109.9,455.4 1109.1,469.1 1109.6,479.7 1111.0,490.5 1113.5,501.1 1116.8,511.4 1121.1,521.3 1126.3,530.9 1132.2,539.9 1139.1,548.7 1146.6,556.6 1155.0,564.0 1163.7,570.6 1173.2,576.5 1183.2,581.6 1193.7,585.9 1204.4,589.4 1215.4,591.9 1226.7,593.5 1238.0,594.2 1249.6,594.0 1260.8,592.9 1272.0,590.8 1282.9,587.8 1293.5,584.0 1303.7,579.2 1313.5,573.7 1322.7,567.4 1331.4,560.3 1339.2,552.7 1346.5,544.3 1352.9,535.5 1358.4,526.2 1363.1,516.4M1302.8,489.8 1305.0,483.2 1306.5,476.5 1307.1,469.6 1307.0,462.7 1306.1,455.9 1304.4,449.2 1302.0,442.7 1298.8,436.5 1294.8,430.6 1290.3,425.2 1285.1,420.3 1279.5,416.1 1273.3,412.3 1266.8,409.3 1260.0,407.0 1253.0,405.4 1245.9,404.5 1238.6,404.4 1231.5,405.0 1224.2,406.4 1217.4,408.5 1210.8,411.3 1204.6,414.7 1198.7,418.9 1193.4,423.5 1188.6,428.8 1184.5,434.5 1181.0,440.6 1178.3,447.0 1176.4,453.6 1175.2,460.4 1174.8,467.2 1175.8,478.0 1178.7,488.5 1183.5,498.4 1190.1,507.4 1198.1,515.1 1207.5,521.4 1217.9,526.0 1228.9,529.0 1240.3,530.0 1251.7,529.2 1262.8,526.5 1273.3,522.0 1282.8,515.9 1291.0,508.4 1297.7,499.6 1302.8,489.8"/><path fill="none" stroke="#FF0000" stroke-width="3.2" d="M1845.8,236.9 1830.4,217.8 1814.2,199.4 1797.2,182.3 1780.3,167.0 1763.0,153.3 1745.5,141.1 1728.0,130.7 1710.5,122.1M1557.4,122.0 1539.6,130.5 1521.5,140.8 1503.2,152.8 1484.6,166.5 1465.6,182.1 1446.2,199.6 1426.7,218.7 1406.7,239.7 1386.4,262.5 1365.9,287.0 1345.2,313.3 1324.3,341.2 1303.4,370.5 1282.4,401.4 1261.5,433.6 1241.0,466.5M653.0,497.6 664.2,488.0 675.7,479.0 688.1,470.4 700.8,462.5 714.0,455.1 727.9,448.2 742.4,441.9 757.1,436.2 772.4,431.0 788.3,426.4 804.8,422.2 821.9,418.7 839.6,415.7 857.5,413.2 876.0,411.4 894.7,410.1 914.3,409.4 934.1,409.2 954.5,409.7 975.0,410.7 996.0,412.3 1017.2,414.4 1038.8,417.1 1060.6,420.4 1082.7,424.3 1105.0,428.7 1150.0,439.2 1195.6,451.9 1241.0,466.5M1167.1,994.8 1172.5,937.1 1179.1,875.4 1187.1,810.2 1196.1,742.9 1206.2,673.5 1217.1,603.8 1228.8,534.5 1241.0,466.5M1699.5,783.0 1711.6,763.3 1722.8,743.0 1733.1,722.0 1742.1,701.3 1750.2,680.1 1757.3,658.3 1763.5,636.1 1768.4,614.4 1772.4,592.3 1775.3,569.8 1777.2,546.9 1778.0,523.8 1777.7,501.5 1776.4,479.0 1774.0,456.3 1770.5,433.4 1765.9,410.5 1760.4,388.7 1753.8,366.9 1746.2,345.1 1737.4,323.5 1728.0,303.1 1717.1,281.8 1705.6,261.9 1693.1,242.3 1679.5,223.1 1664.9,204.2 1650.2,186.9 1634.5,170.0 1617.9,153.7 1600.4,137.9 1582.1,122.8M899.9,122.8 886.9,133.4 873.2,145.2 861.1,156.5 848.5,169.0 837.3,180.9 825.7,194.0 814.6,207.4 804.1,221.0 794.1,234.8 784.6,248.8 775.7,263.0 766.8,278.5 759.0,293.0 751.3,308.8 744.1,324.6 737.6,340.6 731.7,356.6 726.3,372.6 721.6,388.7 717.5,404.8 713.9,420.8 710.7,438.0 708.3,454.0 706.3,471.0 704.9,488.0 704.2,504.8 704.0,521.6 704.4,538.2 705.3,554.6 706.9,571.9 709.0,588.0 711.8,604.9 715.1,621.7 719.0,638.1 723.5,654.3 728.4,670.3 733.9,685.9 739.9,701.3 746.3,716.4 753.7,732.1 761.1,746.6 769.4,761.6 778.2,776.2 787.4,790.5 797.1,804.4 807.2,817.9 817.7,831.0 828.6,843.8 839.9,856.1 852.2,868.7 864.2,880.2 877.3,891.9 890.0,902.5 903.7,913.3 917.7,923.6 932.1,933.4 946.7,942.7 961.6,951.6 976.7,959.9 993.0,968.2 1008.6,975.5 1024.4,982.4 1040.4,988.7 1057.5,994.8M1424.5,994.8 1446.0,987.0 1466.4,978.6 1487.3,969.0 1506.9,959.0 1526.2,948.2 1545.1,936.5 1563.5,924.1 1581.4,910.9 1598.8,896.9 1614.9,882.8 1631.2,867.3 1646.1,851.8 1660.5,835.6 1674.2,818.7 1687.2,801.2 1699.5,783.0"/><text x="1238" y="457.5" font-family="Liberation Serif" font-size="20" fill="#000">90° 0' N</text>
<path d="M1357.5,205.5 L1357.5,200 L1349.5,191 L1350,188.5 L1352,187.5 L1355,190.5 L1354,185 L1352.5,181 L1355,179.5 L1357,182 L1358.5,178 L1361.5,177.5 L1363.5,179 L1366.5,179 L1368.5,182 L1372,183 L1374.5,185 L1374,190 L1371.5,196 L1369,200 L1369,205.5 Z" fill="#fff" stroke="#0A3C9A" stroke-width="1.8" stroke-linejoin="round"/>
<path d="M1359,183 L1359.5,188 M1364,181 L1364,187 M1368.5,184 L1368.5,189" stroke="#0A3C9A" stroke-width="1.4"/>
<rect x="681" y="934" width="383" height="40" fill="#FFFFFF" fill-opacity="0.78" stroke="#000" stroke-width="2.2"/>
<path d="M682,961.8 L994,961.8 M704.5,948 L704.5,965 M762,948 L762,965 M819.5,948 L819.5,965 M877,948 L877,965 M934.5,948 L934.5,965 M993,948 L993,965" stroke="#000" stroke-width="2.6"/>
<g font-family="Liberation Serif" font-size="15" fill="#000">
<text x="1141" y="972">(T)</text><text x="1218" y="972">(T)</text><text x="1296" y="972">(T)</text><text x="1373" y="972">(T)</text><text x="1533" y="972">(T)</text><text x="1609" y="972">(T)</text><text x="1677" y="972">(T)</text>
</g>
</svg></body></html>
